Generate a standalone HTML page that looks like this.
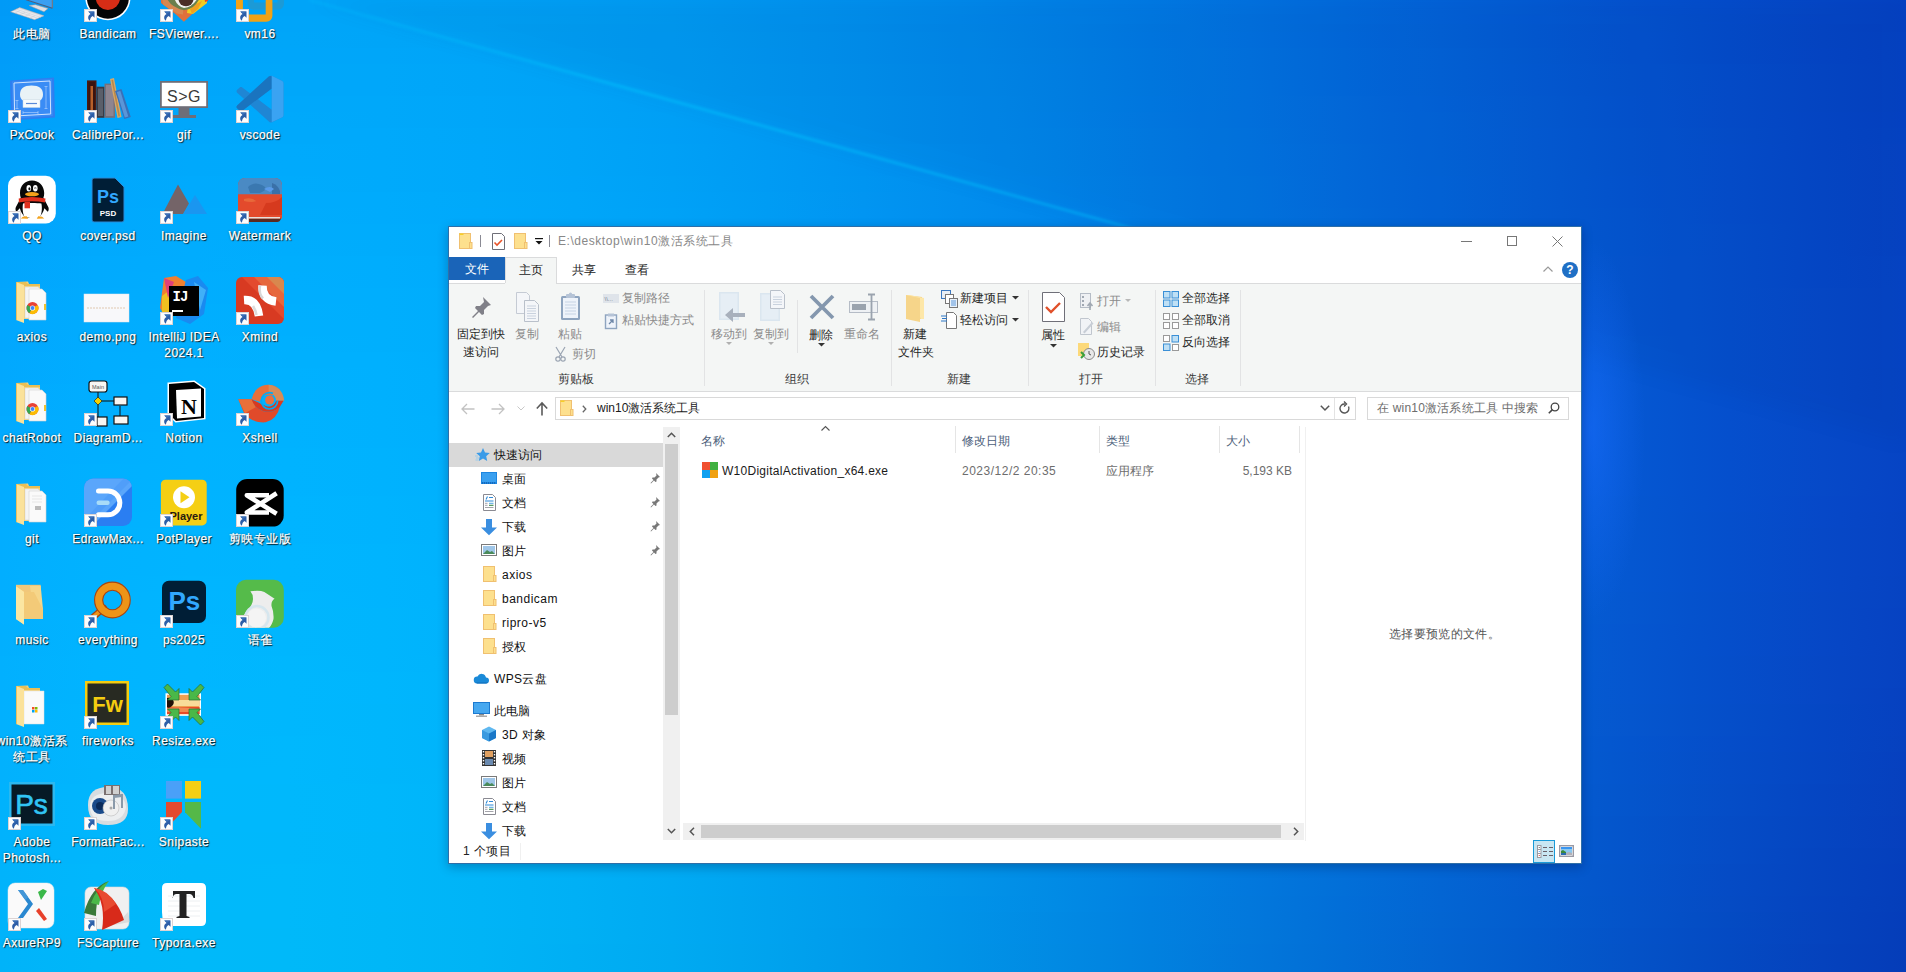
<!DOCTYPE html><html><head><meta charset="utf-8"><style>
*{margin:0;padding:0;box-sizing:border-box}
html,body{width:1906px;height:972px;overflow:hidden}
body{position:relative;font-family:"Liberation Sans",sans-serif;font-size:12px;color:#000;
background:#0a7ad8}
.a{position:absolute}
.t{position:absolute;white-space:nowrap;line-height:16px}
svg{position:absolute;overflow:visible}
.dl{position:absolute;width:76px;text-align:center;color:#fff;font-size:12px;line-height:16px;
 letter-spacing:.45px;-webkit-text-stroke:.25px #fff;text-shadow:1px 1px 1px rgba(0,0,0,.9),0 0 2px rgba(0,0,0,.45)}
</style></head><body>
<svg style="left:0;top:0;position:absolute" width="1906" height="972" viewBox="0 0 1906 972"><defs><linearGradient id="g0" x1="0" x2="1" y1="0" y2="0"><stop offset="0.000" stop-color="#019af7"/><stop offset="0.050" stop-color="#009ff8"/><stop offset="0.101" stop-color="#00a3f8"/><stop offset="0.151" stop-color="#00a4f8"/><stop offset="0.201" stop-color="#00a4f8"/><stop offset="0.252" stop-color="#00a2f6"/><stop offset="0.302" stop-color="#009ff5"/><stop offset="0.353" stop-color="#009bf3"/><stop offset="0.403" stop-color="#0096f1"/><stop offset="0.453" stop-color="#0090ee"/><stop offset="0.504" stop-color="#0089eb"/><stop offset="0.554" stop-color="#0181e7"/><stop offset="0.604" stop-color="#017ae4"/><stop offset="0.655" stop-color="#0272e0"/><stop offset="0.705" stop-color="#026adc"/><stop offset="0.756" stop-color="#0362d8"/><stop offset="0.806" stop-color="#035ad3"/><stop offset="0.856" stop-color="#0452cf"/><stop offset="0.907" stop-color="#044ccb"/><stop offset="0.957" stop-color="#0546c6"/><stop offset="1.000" stop-color="#0541c2"/></linearGradient><linearGradient id="g1" x1="0" x2="1" y1="0" y2="0"><stop offset="0.000" stop-color="#019bf8"/><stop offset="0.050" stop-color="#00a0f9"/><stop offset="0.101" stop-color="#00a3f9"/><stop offset="0.151" stop-color="#00a5f9"/><stop offset="0.201" stop-color="#00a5f8"/><stop offset="0.252" stop-color="#00a3f7"/><stop offset="0.302" stop-color="#00a0f5"/><stop offset="0.353" stop-color="#009cf3"/><stop offset="0.403" stop-color="#0096f1"/><stop offset="0.453" stop-color="#0090ee"/><stop offset="0.504" stop-color="#0089eb"/><stop offset="0.554" stop-color="#0182e8"/><stop offset="0.604" stop-color="#017ae4"/><stop offset="0.655" stop-color="#0272e0"/><stop offset="0.705" stop-color="#026adc"/><stop offset="0.756" stop-color="#0362d8"/><stop offset="0.806" stop-color="#035ad4"/><stop offset="0.856" stop-color="#0453cf"/><stop offset="0.907" stop-color="#044ccb"/><stop offset="0.957" stop-color="#0546c6"/><stop offset="1.000" stop-color="#0541c2"/></linearGradient><linearGradient id="g2" x1="0" x2="1" y1="0" y2="0"><stop offset="0.000" stop-color="#019cf8"/><stop offset="0.050" stop-color="#00a1f9"/><stop offset="0.101" stop-color="#00a4f9"/><stop offset="0.151" stop-color="#00a6f9"/><stop offset="0.201" stop-color="#00a5f8"/><stop offset="0.252" stop-color="#00a4f7"/><stop offset="0.302" stop-color="#00a0f6"/><stop offset="0.353" stop-color="#009cf4"/><stop offset="0.403" stop-color="#0097f1"/><stop offset="0.453" stop-color="#0091ef"/><stop offset="0.504" stop-color="#008aeb"/><stop offset="0.554" stop-color="#0182e8"/><stop offset="0.604" stop-color="#017ae5"/><stop offset="0.655" stop-color="#0272e1"/><stop offset="0.705" stop-color="#026add"/><stop offset="0.756" stop-color="#0362d8"/><stop offset="0.806" stop-color="#035ad4"/><stop offset="0.856" stop-color="#0453d0"/><stop offset="0.907" stop-color="#044ccb"/><stop offset="0.957" stop-color="#0546c6"/><stop offset="1.000" stop-color="#0542c3"/></linearGradient><linearGradient id="g3" x1="0" x2="1" y1="0" y2="0"><stop offset="0.000" stop-color="#019cf9"/><stop offset="0.050" stop-color="#00a2f9"/><stop offset="0.101" stop-color="#00a5fa"/><stop offset="0.151" stop-color="#00a6fa"/><stop offset="0.201" stop-color="#00a6f9"/><stop offset="0.252" stop-color="#00a4f8"/><stop offset="0.302" stop-color="#00a1f6"/><stop offset="0.353" stop-color="#009df4"/><stop offset="0.403" stop-color="#0097f2"/><stop offset="0.453" stop-color="#0091ef"/><stop offset="0.504" stop-color="#008aec"/><stop offset="0.554" stop-color="#0183e8"/><stop offset="0.604" stop-color="#017be5"/><stop offset="0.655" stop-color="#0273e1"/><stop offset="0.705" stop-color="#026bdd"/><stop offset="0.756" stop-color="#0363d9"/><stop offset="0.806" stop-color="#035bd4"/><stop offset="0.856" stop-color="#0453d0"/><stop offset="0.907" stop-color="#044ccb"/><stop offset="0.957" stop-color="#0546c7"/><stop offset="1.000" stop-color="#0542c3"/></linearGradient><linearGradient id="g4" x1="0" x2="1" y1="0" y2="0"><stop offset="0.000" stop-color="#019df9"/><stop offset="0.050" stop-color="#00a2fa"/><stop offset="0.101" stop-color="#00a5fa"/><stop offset="0.151" stop-color="#00a7fa"/><stop offset="0.201" stop-color="#00a7f9"/><stop offset="0.252" stop-color="#00a5f8"/><stop offset="0.302" stop-color="#00a2f6"/><stop offset="0.353" stop-color="#009df4"/><stop offset="0.403" stop-color="#0098f2"/><stop offset="0.453" stop-color="#0092ef"/><stop offset="0.504" stop-color="#008bec"/><stop offset="0.554" stop-color="#0183e9"/><stop offset="0.604" stop-color="#017be5"/><stop offset="0.655" stop-color="#0273e1"/><stop offset="0.705" stop-color="#026bdd"/><stop offset="0.756" stop-color="#0363d9"/><stop offset="0.806" stop-color="#035bd5"/><stop offset="0.856" stop-color="#0454d0"/><stop offset="0.907" stop-color="#044dcc"/><stop offset="0.957" stop-color="#0547c7"/><stop offset="1.000" stop-color="#0542c3"/></linearGradient><linearGradient id="g5" x1="0" x2="1" y1="0" y2="0"><stop offset="0.000" stop-color="#019ef9"/><stop offset="0.050" stop-color="#01a3fa"/><stop offset="0.101" stop-color="#00a6fb"/><stop offset="0.151" stop-color="#00a7fa"/><stop offset="0.201" stop-color="#00a7fa"/><stop offset="0.252" stop-color="#00a5f8"/><stop offset="0.302" stop-color="#00a2f7"/><stop offset="0.353" stop-color="#009ef5"/><stop offset="0.403" stop-color="#0098f2"/><stop offset="0.453" stop-color="#0092f0"/><stop offset="0.504" stop-color="#018bec"/><stop offset="0.554" stop-color="#0184e9"/><stop offset="0.604" stop-color="#017ce5"/><stop offset="0.655" stop-color="#0274e2"/><stop offset="0.705" stop-color="#026bde"/><stop offset="0.756" stop-color="#0363d9"/><stop offset="0.806" stop-color="#045bd5"/><stop offset="0.856" stop-color="#0454d0"/><stop offset="0.907" stop-color="#054dcc"/><stop offset="0.957" stop-color="#0547c7"/><stop offset="1.000" stop-color="#0542c3"/></linearGradient><linearGradient id="g6" x1="0" x2="1" y1="0" y2="0"><stop offset="0.000" stop-color="#019efa"/><stop offset="0.050" stop-color="#01a4fb"/><stop offset="0.101" stop-color="#00a7fb"/><stop offset="0.151" stop-color="#00a8fb"/><stop offset="0.201" stop-color="#00a8fa"/><stop offset="0.252" stop-color="#00a6f9"/><stop offset="0.302" stop-color="#00a3f7"/><stop offset="0.353" stop-color="#009ef5"/><stop offset="0.403" stop-color="#0099f3"/><stop offset="0.453" stop-color="#0093f0"/><stop offset="0.504" stop-color="#018ced"/><stop offset="0.554" stop-color="#0184e9"/><stop offset="0.604" stop-color="#017ce6"/><stop offset="0.655" stop-color="#0274e2"/><stop offset="0.705" stop-color="#036cde"/><stop offset="0.756" stop-color="#0363da"/><stop offset="0.806" stop-color="#045cd5"/><stop offset="0.856" stop-color="#0454d1"/><stop offset="0.907" stop-color="#054dcc"/><stop offset="0.957" stop-color="#0547c7"/><stop offset="1.000" stop-color="#0542c3"/></linearGradient><linearGradient id="g7" x1="0" x2="1" y1="0" y2="0"><stop offset="0.000" stop-color="#019ffa"/><stop offset="0.050" stop-color="#01a4fb"/><stop offset="0.101" stop-color="#00a7fb"/><stop offset="0.151" stop-color="#00a9fb"/><stop offset="0.201" stop-color="#00a8fa"/><stop offset="0.252" stop-color="#00a6f9"/><stop offset="0.302" stop-color="#00a3f7"/><stop offset="0.353" stop-color="#009ff5"/><stop offset="0.403" stop-color="#0099f3"/><stop offset="0.453" stop-color="#0093f0"/><stop offset="0.504" stop-color="#018ced"/><stop offset="0.554" stop-color="#0184ea"/><stop offset="0.604" stop-color="#027ce6"/><stop offset="0.655" stop-color="#0274e2"/><stop offset="0.705" stop-color="#036cde"/><stop offset="0.756" stop-color="#0364da"/><stop offset="0.806" stop-color="#045cd5"/><stop offset="0.856" stop-color="#0454d1"/><stop offset="0.907" stop-color="#054dcc"/><stop offset="0.957" stop-color="#0547c8"/><stop offset="1.000" stop-color="#0542c4"/></linearGradient><linearGradient id="g8" x1="0" x2="1" y1="0" y2="0"><stop offset="0.000" stop-color="#01a0fb"/><stop offset="0.050" stop-color="#01a5fb"/><stop offset="0.101" stop-color="#00a8fc"/><stop offset="0.151" stop-color="#00a9fb"/><stop offset="0.201" stop-color="#00a9fb"/><stop offset="0.252" stop-color="#00a7f9"/><stop offset="0.302" stop-color="#00a4f8"/><stop offset="0.353" stop-color="#009ff6"/><stop offset="0.403" stop-color="#009af3"/><stop offset="0.453" stop-color="#0093f0"/><stop offset="0.504" stop-color="#018ced"/><stop offset="0.554" stop-color="#0185ea"/><stop offset="0.604" stop-color="#027de6"/><stop offset="0.655" stop-color="#0275e2"/><stop offset="0.705" stop-color="#036cde"/><stop offset="0.756" stop-color="#0364da"/><stop offset="0.806" stop-color="#045cd6"/><stop offset="0.856" stop-color="#0455d1"/><stop offset="0.907" stop-color="#054ecc"/><stop offset="0.957" stop-color="#0547c8"/><stop offset="1.000" stop-color="#0543c4"/></linearGradient><linearGradient id="g9" x1="0" x2="1" y1="0" y2="0"><stop offset="0.000" stop-color="#01a0fb"/><stop offset="0.050" stop-color="#01a5fc"/><stop offset="0.101" stop-color="#00a9fc"/><stop offset="0.151" stop-color="#00aafc"/><stop offset="0.201" stop-color="#00a9fb"/><stop offset="0.252" stop-color="#00a7fa"/><stop offset="0.302" stop-color="#00a4f8"/><stop offset="0.353" stop-color="#00a0f6"/><stop offset="0.403" stop-color="#009af3"/><stop offset="0.453" stop-color="#0094f1"/><stop offset="0.504" stop-color="#018dee"/><stop offset="0.554" stop-color="#0185ea"/><stop offset="0.604" stop-color="#027de6"/><stop offset="0.655" stop-color="#0275e3"/><stop offset="0.705" stop-color="#036dde"/><stop offset="0.756" stop-color="#0364da"/><stop offset="0.806" stop-color="#045cd6"/><stop offset="0.856" stop-color="#0455d1"/><stop offset="0.907" stop-color="#054ecd"/><stop offset="0.957" stop-color="#0547c8"/><stop offset="1.000" stop-color="#0643c4"/></linearGradient><linearGradient id="g10" x1="0" x2="1" y1="0" y2="0"><stop offset="0.000" stop-color="#01a1fb"/><stop offset="0.050" stop-color="#01a6fc"/><stop offset="0.101" stop-color="#00a9fc"/><stop offset="0.151" stop-color="#00aafc"/><stop offset="0.201" stop-color="#00aafb"/><stop offset="0.252" stop-color="#00a8fa"/><stop offset="0.302" stop-color="#00a5f8"/><stop offset="0.353" stop-color="#00a0f6"/><stop offset="0.403" stop-color="#009bf4"/><stop offset="0.453" stop-color="#0094f1"/><stop offset="0.504" stop-color="#018dee"/><stop offset="0.554" stop-color="#0186ea"/><stop offset="0.604" stop-color="#027de7"/><stop offset="0.655" stop-color="#0275e3"/><stop offset="0.705" stop-color="#036ddf"/><stop offset="0.756" stop-color="#0365da"/><stop offset="0.806" stop-color="#045dd6"/><stop offset="0.856" stop-color="#0455d1"/><stop offset="0.907" stop-color="#054ecd"/><stop offset="0.957" stop-color="#0548c8"/><stop offset="1.000" stop-color="#0643c4"/></linearGradient><linearGradient id="g11" x1="0" x2="1" y1="0" y2="0"><stop offset="0.000" stop-color="#01a2fc"/><stop offset="0.050" stop-color="#01a7fc"/><stop offset="0.101" stop-color="#00aafd"/><stop offset="0.151" stop-color="#00abfc"/><stop offset="0.201" stop-color="#00aafb"/><stop offset="0.252" stop-color="#00a8fa"/><stop offset="0.302" stop-color="#00a5f9"/><stop offset="0.353" stop-color="#00a1f6"/><stop offset="0.403" stop-color="#009bf4"/><stop offset="0.453" stop-color="#0095f1"/><stop offset="0.504" stop-color="#018eee"/><stop offset="0.554" stop-color="#0186eb"/><stop offset="0.604" stop-color="#027ee7"/><stop offset="0.655" stop-color="#0276e3"/><stop offset="0.705" stop-color="#036ddf"/><stop offset="0.756" stop-color="#0365db"/><stop offset="0.806" stop-color="#045dd6"/><stop offset="0.856" stop-color="#0455d2"/><stop offset="0.907" stop-color="#054ecd"/><stop offset="0.957" stop-color="#0548c8"/><stop offset="1.000" stop-color="#0643c4"/></linearGradient><linearGradient id="g12" x1="0" x2="1" y1="0" y2="0"><stop offset="0.000" stop-color="#02a2fc"/><stop offset="0.050" stop-color="#01a7fd"/><stop offset="0.101" stop-color="#00aafd"/><stop offset="0.151" stop-color="#00abfd"/><stop offset="0.201" stop-color="#00abfc"/><stop offset="0.252" stop-color="#00a9fa"/><stop offset="0.302" stop-color="#00a6f9"/><stop offset="0.353" stop-color="#00a1f7"/><stop offset="0.403" stop-color="#009cf4"/><stop offset="0.453" stop-color="#0195f1"/><stop offset="0.504" stop-color="#018eee"/><stop offset="0.554" stop-color="#0186eb"/><stop offset="0.604" stop-color="#027ee7"/><stop offset="0.655" stop-color="#0276e3"/><stop offset="0.705" stop-color="#036ddf"/><stop offset="0.756" stop-color="#0365db"/><stop offset="0.806" stop-color="#045dd6"/><stop offset="0.856" stop-color="#0455d2"/><stop offset="0.907" stop-color="#054ecd"/><stop offset="0.957" stop-color="#0548c8"/><stop offset="1.000" stop-color="#0643c4"/></linearGradient><linearGradient id="g13" x1="0" x2="1" y1="0" y2="0"><stop offset="0.000" stop-color="#02a3fc"/><stop offset="0.050" stop-color="#01a8fd"/><stop offset="0.101" stop-color="#00abfd"/><stop offset="0.151" stop-color="#00acfd"/><stop offset="0.201" stop-color="#00abfc"/><stop offset="0.252" stop-color="#00a9fb"/><stop offset="0.302" stop-color="#00a6f9"/><stop offset="0.353" stop-color="#00a2f7"/><stop offset="0.403" stop-color="#009cf4"/><stop offset="0.453" stop-color="#0195f2"/><stop offset="0.504" stop-color="#018eee"/><stop offset="0.554" stop-color="#0187eb"/><stop offset="0.604" stop-color="#027ee7"/><stop offset="0.655" stop-color="#0276e3"/><stop offset="0.705" stop-color="#036edf"/><stop offset="0.756" stop-color="#0365db"/><stop offset="0.806" stop-color="#045dd6"/><stop offset="0.856" stop-color="#0456d2"/><stop offset="0.907" stop-color="#054ecd"/><stop offset="0.957" stop-color="#0548c8"/><stop offset="1.000" stop-color="#0643c4"/></linearGradient><linearGradient id="g14" x1="0" x2="1" y1="0" y2="0"><stop offset="0.000" stop-color="#02a3fc"/><stop offset="0.050" stop-color="#01a8fd"/><stop offset="0.101" stop-color="#00abfd"/><stop offset="0.151" stop-color="#00acfd"/><stop offset="0.201" stop-color="#00acfc"/><stop offset="0.252" stop-color="#00aafb"/><stop offset="0.302" stop-color="#00a7f9"/><stop offset="0.353" stop-color="#00a2f7"/><stop offset="0.403" stop-color="#009cf5"/><stop offset="0.453" stop-color="#0196f2"/><stop offset="0.504" stop-color="#018fef"/><stop offset="0.554" stop-color="#0187eb"/><stop offset="0.604" stop-color="#027fe7"/><stop offset="0.655" stop-color="#0276e3"/><stop offset="0.705" stop-color="#036edf"/><stop offset="0.756" stop-color="#0366db"/><stop offset="0.806" stop-color="#045dd6"/><stop offset="0.856" stop-color="#0456d2"/><stop offset="0.907" stop-color="#054fcd"/><stop offset="0.957" stop-color="#0548c8"/><stop offset="1.000" stop-color="#0643c4"/></linearGradient><linearGradient id="g15" x1="0" x2="1" y1="0" y2="0"><stop offset="0.000" stop-color="#02a4fd"/><stop offset="0.050" stop-color="#01a9fd"/><stop offset="0.101" stop-color="#01acfe"/><stop offset="0.151" stop-color="#00adfd"/><stop offset="0.201" stop-color="#00acfc"/><stop offset="0.252" stop-color="#00aafb"/><stop offset="0.302" stop-color="#00a7f9"/><stop offset="0.353" stop-color="#00a2f7"/><stop offset="0.403" stop-color="#009df5"/><stop offset="0.453" stop-color="#0196f2"/><stop offset="0.504" stop-color="#018fef"/><stop offset="0.554" stop-color="#0187eb"/><stop offset="0.604" stop-color="#027fe8"/><stop offset="0.655" stop-color="#0277e4"/><stop offset="0.705" stop-color="#036edf"/><stop offset="0.756" stop-color="#0366db"/><stop offset="0.806" stop-color="#045ed7"/><stop offset="0.856" stop-color="#0456d2"/><stop offset="0.907" stop-color="#054fcd"/><stop offset="0.957" stop-color="#0548c9"/><stop offset="1.000" stop-color="#0643c4"/></linearGradient><linearGradient id="g16" x1="0" x2="1" y1="0" y2="0"><stop offset="0.000" stop-color="#02a5fd"/><stop offset="0.050" stop-color="#01aafe"/><stop offset="0.101" stop-color="#01acfe"/><stop offset="0.151" stop-color="#00aefd"/><stop offset="0.201" stop-color="#00adfd"/><stop offset="0.252" stop-color="#00abfb"/><stop offset="0.302" stop-color="#00a7fa"/><stop offset="0.353" stop-color="#00a3f7"/><stop offset="0.403" stop-color="#009df5"/><stop offset="0.453" stop-color="#0197f2"/><stop offset="0.504" stop-color="#018fef"/><stop offset="0.554" stop-color="#0187eb"/><stop offset="0.604" stop-color="#027fe8"/><stop offset="0.655" stop-color="#0277e4"/><stop offset="0.705" stop-color="#036edf"/><stop offset="0.756" stop-color="#0366db"/><stop offset="0.806" stop-color="#045ed7"/><stop offset="0.856" stop-color="#0556d2"/><stop offset="0.907" stop-color="#054fcd"/><stop offset="0.957" stop-color="#0548c9"/><stop offset="1.000" stop-color="#0644c5"/></linearGradient><linearGradient id="g17" x1="0" x2="1" y1="0" y2="0"><stop offset="0.000" stop-color="#02a5fd"/><stop offset="0.050" stop-color="#01aafe"/><stop offset="0.101" stop-color="#01adfe"/><stop offset="0.151" stop-color="#00aefe"/><stop offset="0.201" stop-color="#00adfd"/><stop offset="0.252" stop-color="#00abfc"/><stop offset="0.302" stop-color="#00a8fa"/><stop offset="0.353" stop-color="#00a3f8"/><stop offset="0.403" stop-color="#009df5"/><stop offset="0.453" stop-color="#0197f2"/><stop offset="0.504" stop-color="#0190ef"/><stop offset="0.554" stop-color="#0188eb"/><stop offset="0.604" stop-color="#0280e8"/><stop offset="0.655" stop-color="#0277e4"/><stop offset="0.705" stop-color="#036fe0"/><stop offset="0.756" stop-color="#0466db"/><stop offset="0.806" stop-color="#045ed7"/><stop offset="0.856" stop-color="#0556d2"/><stop offset="0.907" stop-color="#054fcd"/><stop offset="0.957" stop-color="#0548c9"/><stop offset="1.000" stop-color="#0644c5"/></linearGradient><linearGradient id="g18" x1="0" x2="1" y1="0" y2="0"><stop offset="0.000" stop-color="#02a6fd"/><stop offset="0.050" stop-color="#01abfe"/><stop offset="0.101" stop-color="#01adfe"/><stop offset="0.151" stop-color="#00aefe"/><stop offset="0.201" stop-color="#00aefd"/><stop offset="0.252" stop-color="#00acfc"/><stop offset="0.302" stop-color="#00a8fa"/><stop offset="0.353" stop-color="#00a4f8"/><stop offset="0.403" stop-color="#009ef5"/><stop offset="0.453" stop-color="#0197f2"/><stop offset="0.504" stop-color="#0190ef"/><stop offset="0.554" stop-color="#0288ec"/><stop offset="0.604" stop-color="#0280e8"/><stop offset="0.655" stop-color="#0277e4"/><stop offset="0.705" stop-color="#036fe0"/><stop offset="0.756" stop-color="#0466db"/><stop offset="0.806" stop-color="#045ed7"/><stop offset="0.856" stop-color="#0556d2"/><stop offset="0.907" stop-color="#054fcd"/><stop offset="0.957" stop-color="#0649c9"/><stop offset="1.000" stop-color="#0644c5"/></linearGradient><linearGradient id="g19" x1="0" x2="1" y1="0" y2="0"><stop offset="0.000" stop-color="#02a6fe"/><stop offset="0.050" stop-color="#01abfe"/><stop offset="0.101" stop-color="#01aefe"/><stop offset="0.151" stop-color="#00affe"/><stop offset="0.201" stop-color="#00aefd"/><stop offset="0.252" stop-color="#00acfc"/><stop offset="0.302" stop-color="#00a9fa"/><stop offset="0.353" stop-color="#00a4f8"/><stop offset="0.403" stop-color="#009ef5"/><stop offset="0.453" stop-color="#0198f2"/><stop offset="0.504" stop-color="#0190ef"/><stop offset="0.554" stop-color="#0288ec"/><stop offset="0.604" stop-color="#0280e8"/><stop offset="0.655" stop-color="#0378e4"/><stop offset="0.705" stop-color="#036fe0"/><stop offset="0.756" stop-color="#0466db"/><stop offset="0.806" stop-color="#045ed7"/><stop offset="0.856" stop-color="#0556d2"/><stop offset="0.907" stop-color="#054fcd"/><stop offset="0.957" stop-color="#0649c9"/><stop offset="1.000" stop-color="#0644c5"/></linearGradient><linearGradient id="g20" x1="0" x2="1" y1="0" y2="0"><stop offset="0.000" stop-color="#02a7fe"/><stop offset="0.050" stop-color="#01acfe"/><stop offset="0.101" stop-color="#01aeff"/><stop offset="0.151" stop-color="#00affe"/><stop offset="0.201" stop-color="#00affd"/><stop offset="0.252" stop-color="#00adfc"/><stop offset="0.302" stop-color="#00a9fa"/><stop offset="0.353" stop-color="#00a4f8"/><stop offset="0.403" stop-color="#009ef5"/><stop offset="0.453" stop-color="#0198f3"/><stop offset="0.504" stop-color="#0190ef"/><stop offset="0.554" stop-color="#0289ec"/><stop offset="0.604" stop-color="#0280e8"/><stop offset="0.655" stop-color="#0378e4"/><stop offset="0.705" stop-color="#036fe0"/><stop offset="0.756" stop-color="#0467db"/><stop offset="0.806" stop-color="#045ed7"/><stop offset="0.856" stop-color="#0556d2"/><stop offset="0.907" stop-color="#054fcd"/><stop offset="0.957" stop-color="#0649c9"/><stop offset="1.000" stop-color="#0644c5"/></linearGradient><linearGradient id="g21" x1="0" x2="1" y1="0" y2="0"><stop offset="0.000" stop-color="#02a7fe"/><stop offset="0.050" stop-color="#01acff"/><stop offset="0.101" stop-color="#01afff"/><stop offset="0.151" stop-color="#00b0fe"/><stop offset="0.201" stop-color="#00affd"/><stop offset="0.252" stop-color="#00adfc"/><stop offset="0.302" stop-color="#00a9fa"/><stop offset="0.353" stop-color="#00a5f8"/><stop offset="0.403" stop-color="#009ff6"/><stop offset="0.453" stop-color="#0198f3"/><stop offset="0.504" stop-color="#0191ef"/><stop offset="0.554" stop-color="#0289ec"/><stop offset="0.604" stop-color="#0280e8"/><stop offset="0.655" stop-color="#0378e4"/><stop offset="0.705" stop-color="#036fe0"/><stop offset="0.756" stop-color="#0467db"/><stop offset="0.806" stop-color="#045ed7"/><stop offset="0.856" stop-color="#0557d2"/><stop offset="0.907" stop-color="#054fcd"/><stop offset="0.957" stop-color="#0649c9"/><stop offset="1.000" stop-color="#0644c5"/></linearGradient><linearGradient id="g22" x1="0" x2="1" y1="0" y2="0"><stop offset="0.000" stop-color="#02a8fe"/><stop offset="0.050" stop-color="#01adff"/><stop offset="0.101" stop-color="#01afff"/><stop offset="0.151" stop-color="#00b0fe"/><stop offset="0.201" stop-color="#00b0fe"/><stop offset="0.252" stop-color="#00adfc"/><stop offset="0.302" stop-color="#00aafa"/><stop offset="0.353" stop-color="#00a5f8"/><stop offset="0.403" stop-color="#019ff6"/><stop offset="0.453" stop-color="#0198f3"/><stop offset="0.504" stop-color="#0191ef"/><stop offset="0.554" stop-color="#0289ec"/><stop offset="0.604" stop-color="#0281e8"/><stop offset="0.655" stop-color="#0378e4"/><stop offset="0.705" stop-color="#036fe0"/><stop offset="0.756" stop-color="#0467db"/><stop offset="0.806" stop-color="#045fd7"/><stop offset="0.856" stop-color="#0557d2"/><stop offset="0.907" stop-color="#054fcd"/><stop offset="0.957" stop-color="#0649c9"/><stop offset="1.000" stop-color="#0644c5"/></linearGradient><linearGradient id="g23" x1="0" x2="1" y1="0" y2="0"><stop offset="0.000" stop-color="#02a8fe"/><stop offset="0.050" stop-color="#01adff"/><stop offset="0.101" stop-color="#01b0ff"/><stop offset="0.151" stop-color="#00b1ff"/><stop offset="0.201" stop-color="#00b0fe"/><stop offset="0.252" stop-color="#00aefc"/><stop offset="0.302" stop-color="#00aafa"/><stop offset="0.353" stop-color="#00a5f8"/><stop offset="0.403" stop-color="#019ff6"/><stop offset="0.453" stop-color="#0199f3"/><stop offset="0.504" stop-color="#0191ef"/><stop offset="0.554" stop-color="#0289ec"/><stop offset="0.604" stop-color="#0281e8"/><stop offset="0.655" stop-color="#0378e4"/><stop offset="0.705" stop-color="#0370e0"/><stop offset="0.756" stop-color="#0467db"/><stop offset="0.806" stop-color="#045fd7"/><stop offset="0.856" stop-color="#0557d2"/><stop offset="0.907" stop-color="#054fcd"/><stop offset="0.957" stop-color="#0649c9"/><stop offset="1.000" stop-color="#0644c4"/></linearGradient><linearGradient id="g24" x1="0" x2="1" y1="0" y2="0"><stop offset="0.000" stop-color="#02a9fe"/><stop offset="0.050" stop-color="#01aeff"/><stop offset="0.101" stop-color="#01b0ff"/><stop offset="0.151" stop-color="#00b1ff"/><stop offset="0.201" stop-color="#00b0fe"/><stop offset="0.252" stop-color="#00aefc"/><stop offset="0.302" stop-color="#00aafb"/><stop offset="0.353" stop-color="#00a6f8"/><stop offset="0.403" stop-color="#01a0f6"/><stop offset="0.453" stop-color="#0199f3"/><stop offset="0.504" stop-color="#0191ef"/><stop offset="0.554" stop-color="#0289ec"/><stop offset="0.604" stop-color="#0281e8"/><stop offset="0.655" stop-color="#0378e4"/><stop offset="0.705" stop-color="#0370e0"/><stop offset="0.756" stop-color="#0467db"/><stop offset="0.806" stop-color="#045fd7"/><stop offset="0.856" stop-color="#0557d2"/><stop offset="0.907" stop-color="#054fcd"/><stop offset="0.957" stop-color="#0649c9"/><stop offset="1.000" stop-color="#0644c4"/></linearGradient><linearGradient id="g25" x1="0" x2="1" y1="0" y2="0"><stop offset="0.000" stop-color="#02a9fe"/><stop offset="0.050" stop-color="#01aeff"/><stop offset="0.101" stop-color="#01b1ff"/><stop offset="0.151" stop-color="#00b2ff"/><stop offset="0.201" stop-color="#00b1fe"/><stop offset="0.252" stop-color="#00aefc"/><stop offset="0.302" stop-color="#00abfb"/><stop offset="0.353" stop-color="#00a6f8"/><stop offset="0.403" stop-color="#01a0f6"/><stop offset="0.453" stop-color="#0199f3"/><stop offset="0.504" stop-color="#0192ef"/><stop offset="0.554" stop-color="#028aec"/><stop offset="0.604" stop-color="#0281e8"/><stop offset="0.655" stop-color="#0379e4"/><stop offset="0.705" stop-color="#0370e0"/><stop offset="0.756" stop-color="#0467db"/><stop offset="0.806" stop-color="#045fd7"/><stop offset="0.856" stop-color="#0557d2"/><stop offset="0.907" stop-color="#054fcd"/><stop offset="0.957" stop-color="#0649c8"/><stop offset="1.000" stop-color="#0644c4"/></linearGradient><linearGradient id="g26" x1="0" x2="1" y1="0" y2="0"><stop offset="0.000" stop-color="#02aaff"/><stop offset="0.050" stop-color="#01aeff"/><stop offset="0.101" stop-color="#01b1ff"/><stop offset="0.151" stop-color="#00b2ff"/><stop offset="0.201" stop-color="#00b1fe"/><stop offset="0.252" stop-color="#00affc"/><stop offset="0.302" stop-color="#00abfb"/><stop offset="0.353" stop-color="#00a6f8"/><stop offset="0.403" stop-color="#01a0f6"/><stop offset="0.453" stop-color="#0199f3"/><stop offset="0.504" stop-color="#0192ef"/><stop offset="0.554" stop-color="#028aec"/><stop offset="0.604" stop-color="#0281e8"/><stop offset="0.655" stop-color="#0379e4"/><stop offset="0.705" stop-color="#0370e0"/><stop offset="0.756" stop-color="#0467db"/><stop offset="0.806" stop-color="#045fd7"/><stop offset="0.856" stop-color="#0557d2"/><stop offset="0.907" stop-color="#054fcd"/><stop offset="0.957" stop-color="#0649c8"/><stop offset="1.000" stop-color="#0644c4"/></linearGradient><linearGradient id="g27" x1="0" x2="1" y1="0" y2="0"><stop offset="0.000" stop-color="#02aaff"/><stop offset="0.050" stop-color="#01afff"/><stop offset="0.101" stop-color="#01b2ff"/><stop offset="0.151" stop-color="#00b2ff"/><stop offset="0.201" stop-color="#00b1fe"/><stop offset="0.252" stop-color="#00affd"/><stop offset="0.302" stop-color="#00abfb"/><stop offset="0.353" stop-color="#00a6f8"/><stop offset="0.403" stop-color="#01a0f6"/><stop offset="0.453" stop-color="#019af3"/><stop offset="0.504" stop-color="#0192ef"/><stop offset="0.554" stop-color="#028aec"/><stop offset="0.604" stop-color="#0282e8"/><stop offset="0.655" stop-color="#0379e4"/><stop offset="0.705" stop-color="#0370e0"/><stop offset="0.756" stop-color="#0467db"/><stop offset="0.806" stop-color="#045fd7"/><stop offset="0.856" stop-color="#0557d2"/><stop offset="0.907" stop-color="#054fcd"/><stop offset="0.957" stop-color="#0649c8"/><stop offset="1.000" stop-color="#0644c4"/></linearGradient><linearGradient id="g28" x1="0" x2="1" y1="0" y2="0"><stop offset="0.000" stop-color="#02abff"/><stop offset="0.050" stop-color="#01afff"/><stop offset="0.101" stop-color="#01b2ff"/><stop offset="0.151" stop-color="#00b3ff"/><stop offset="0.201" stop-color="#00b2fe"/><stop offset="0.252" stop-color="#00affd"/><stop offset="0.302" stop-color="#00acfb"/><stop offset="0.353" stop-color="#00a7f8"/><stop offset="0.403" stop-color="#01a1f6"/><stop offset="0.453" stop-color="#019af3"/><stop offset="0.504" stop-color="#0192ef"/><stop offset="0.554" stop-color="#028aec"/><stop offset="0.604" stop-color="#0282e8"/><stop offset="0.655" stop-color="#0379e4"/><stop offset="0.705" stop-color="#0370e0"/><stop offset="0.756" stop-color="#0467db"/><stop offset="0.806" stop-color="#045fd7"/><stop offset="0.856" stop-color="#0557d2"/><stop offset="0.907" stop-color="#054fcd"/><stop offset="0.957" stop-color="#0649c8"/><stop offset="1.000" stop-color="#0644c4"/></linearGradient><linearGradient id="g29" x1="0" x2="1" y1="0" y2="0"><stop offset="0.000" stop-color="#02abff"/><stop offset="0.050" stop-color="#01b0ff"/><stop offset="0.101" stop-color="#01b2ff"/><stop offset="0.151" stop-color="#00b3ff"/><stop offset="0.201" stop-color="#00b2fe"/><stop offset="0.252" stop-color="#00b0fd"/><stop offset="0.302" stop-color="#00acfb"/><stop offset="0.353" stop-color="#00a7f8"/><stop offset="0.403" stop-color="#01a1f6"/><stop offset="0.453" stop-color="#019af3"/><stop offset="0.504" stop-color="#0192ef"/><stop offset="0.554" stop-color="#028aec"/><stop offset="0.604" stop-color="#0282e8"/><stop offset="0.655" stop-color="#0379e4"/><stop offset="0.705" stop-color="#0370e0"/><stop offset="0.756" stop-color="#0468db"/><stop offset="0.806" stop-color="#045fd6"/><stop offset="0.856" stop-color="#0557d2"/><stop offset="0.907" stop-color="#054fcd"/><stop offset="0.957" stop-color="#0649c8"/><stop offset="1.000" stop-color="#0644c4"/></linearGradient><linearGradient id="g30" x1="0" x2="1" y1="0" y2="0"><stop offset="0.000" stop-color="#02acff"/><stop offset="0.050" stop-color="#01b0ff"/><stop offset="0.101" stop-color="#01b3ff"/><stop offset="0.151" stop-color="#00b3ff"/><stop offset="0.201" stop-color="#00b2fe"/><stop offset="0.252" stop-color="#00b0fd"/><stop offset="0.302" stop-color="#00acfb"/><stop offset="0.353" stop-color="#00a7f8"/><stop offset="0.403" stop-color="#01a1f6"/><stop offset="0.453" stop-color="#019af3"/><stop offset="0.504" stop-color="#0193ef"/><stop offset="0.554" stop-color="#028bec"/><stop offset="0.604" stop-color="#0282e8"/><stop offset="0.655" stop-color="#0379e4"/><stop offset="0.705" stop-color="#0370df"/><stop offset="0.756" stop-color="#0468db"/><stop offset="0.806" stop-color="#045fd6"/><stop offset="0.856" stop-color="#0557d2"/><stop offset="0.907" stop-color="#054fcd"/><stop offset="0.957" stop-color="#0649c8"/><stop offset="1.000" stop-color="#0643c4"/></linearGradient><linearGradient id="g31" x1="0" x2="1" y1="0" y2="0"><stop offset="0.000" stop-color="#02acff"/><stop offset="0.050" stop-color="#01b0ff"/><stop offset="0.101" stop-color="#01b3ff"/><stop offset="0.151" stop-color="#00b4ff"/><stop offset="0.201" stop-color="#00b3fe"/><stop offset="0.252" stop-color="#00b0fc"/><stop offset="0.302" stop-color="#00acfb"/><stop offset="0.353" stop-color="#00a7f8"/><stop offset="0.403" stop-color="#01a1f6"/><stop offset="0.453" stop-color="#019af3"/><stop offset="0.504" stop-color="#0193ef"/><stop offset="0.554" stop-color="#028bec"/><stop offset="0.604" stop-color="#0282e8"/><stop offset="0.655" stop-color="#0379e4"/><stop offset="0.705" stop-color="#0370df"/><stop offset="0.756" stop-color="#0468db"/><stop offset="0.806" stop-color="#045fd6"/><stop offset="0.856" stop-color="#0557d1"/><stop offset="0.907" stop-color="#054fcd"/><stop offset="0.957" stop-color="#0648c8"/><stop offset="1.000" stop-color="#0643c4"/></linearGradient><linearGradient id="g32" x1="0" x2="1" y1="0" y2="0"><stop offset="0.000" stop-color="#02acff"/><stop offset="0.050" stop-color="#01b1ff"/><stop offset="0.101" stop-color="#01b3ff"/><stop offset="0.151" stop-color="#00b4ff"/><stop offset="0.201" stop-color="#00b3fe"/><stop offset="0.252" stop-color="#00b1fc"/><stop offset="0.302" stop-color="#00adfb"/><stop offset="0.353" stop-color="#00a8f8"/><stop offset="0.403" stop-color="#01a2f6"/><stop offset="0.453" stop-color="#019bf3"/><stop offset="0.504" stop-color="#0193ef"/><stop offset="0.554" stop-color="#028bec"/><stop offset="0.604" stop-color="#0282e8"/><stop offset="0.655" stop-color="#0379e4"/><stop offset="0.705" stop-color="#0370df"/><stop offset="0.756" stop-color="#0468db"/><stop offset="0.806" stop-color="#045fd6"/><stop offset="0.856" stop-color="#0557d1"/><stop offset="0.907" stop-color="#054fcc"/><stop offset="0.957" stop-color="#0648c8"/><stop offset="1.000" stop-color="#0643c3"/></linearGradient><linearGradient id="g33" x1="0" x2="1" y1="0" y2="0"><stop offset="0.000" stop-color="#02adff"/><stop offset="0.050" stop-color="#01b1ff"/><stop offset="0.101" stop-color="#01b4ff"/><stop offset="0.151" stop-color="#00b4ff"/><stop offset="0.201" stop-color="#00b3fe"/><stop offset="0.252" stop-color="#00b1fc"/><stop offset="0.302" stop-color="#00adfa"/><stop offset="0.353" stop-color="#00a8f8"/><stop offset="0.403" stop-color="#01a2f5"/><stop offset="0.453" stop-color="#019bf2"/><stop offset="0.504" stop-color="#0193ef"/><stop offset="0.554" stop-color="#028beb"/><stop offset="0.604" stop-color="#0282e8"/><stop offset="0.655" stop-color="#0379e3"/><stop offset="0.705" stop-color="#0370df"/><stop offset="0.756" stop-color="#0468db"/><stop offset="0.806" stop-color="#045fd6"/><stop offset="0.856" stop-color="#0557d1"/><stop offset="0.907" stop-color="#054fcc"/><stop offset="0.957" stop-color="#0648c7"/><stop offset="1.000" stop-color="#0643c3"/></linearGradient><linearGradient id="g34" x1="0" x2="1" y1="0" y2="0"><stop offset="0.000" stop-color="#02adff"/><stop offset="0.050" stop-color="#01b2ff"/><stop offset="0.101" stop-color="#01b4ff"/><stop offset="0.151" stop-color="#00b5ff"/><stop offset="0.201" stop-color="#00b4fe"/><stop offset="0.252" stop-color="#00b1fc"/><stop offset="0.302" stop-color="#00adfa"/><stop offset="0.353" stop-color="#00a8f8"/><stop offset="0.403" stop-color="#01a2f5"/><stop offset="0.453" stop-color="#019bf2"/><stop offset="0.504" stop-color="#0193ef"/><stop offset="0.554" stop-color="#028beb"/><stop offset="0.604" stop-color="#0282e7"/><stop offset="0.655" stop-color="#0379e3"/><stop offset="0.705" stop-color="#0371df"/><stop offset="0.756" stop-color="#0468da"/><stop offset="0.806" stop-color="#045fd6"/><stop offset="0.856" stop-color="#0557d1"/><stop offset="0.907" stop-color="#054fcc"/><stop offset="0.957" stop-color="#0648c7"/><stop offset="1.000" stop-color="#0643c3"/></linearGradient><linearGradient id="g35" x1="0" x2="1" y1="0" y2="0"><stop offset="0.000" stop-color="#02aeff"/><stop offset="0.050" stop-color="#01b2ff"/><stop offset="0.101" stop-color="#01b4ff"/><stop offset="0.151" stop-color="#00b5ff"/><stop offset="0.201" stop-color="#00b4fe"/><stop offset="0.252" stop-color="#00b1fc"/><stop offset="0.302" stop-color="#00adfa"/><stop offset="0.353" stop-color="#00a8f8"/><stop offset="0.403" stop-color="#01a2f5"/><stop offset="0.453" stop-color="#019bf2"/><stop offset="0.504" stop-color="#0193ef"/><stop offset="0.554" stop-color="#028beb"/><stop offset="0.604" stop-color="#0282e7"/><stop offset="0.655" stop-color="#037ae3"/><stop offset="0.705" stop-color="#0371df"/><stop offset="0.756" stop-color="#0468da"/><stop offset="0.806" stop-color="#045fd6"/><stop offset="0.856" stop-color="#0557d1"/><stop offset="0.907" stop-color="#054fcc"/><stop offset="0.957" stop-color="#0648c7"/><stop offset="1.000" stop-color="#0643c3"/></linearGradient><linearGradient id="g36" x1="0" x2="1" y1="0" y2="0"><stop offset="0.000" stop-color="#02aeff"/><stop offset="0.050" stop-color="#01b2ff"/><stop offset="0.101" stop-color="#01b5ff"/><stop offset="0.151" stop-color="#00b5ff"/><stop offset="0.201" stop-color="#00b4fe"/><stop offset="0.252" stop-color="#00b2fc"/><stop offset="0.302" stop-color="#00aefa"/><stop offset="0.353" stop-color="#00a8f8"/><stop offset="0.403" stop-color="#01a2f5"/><stop offset="0.453" stop-color="#019bf2"/><stop offset="0.504" stop-color="#0193ef"/><stop offset="0.554" stop-color="#028beb"/><stop offset="0.604" stop-color="#0282e7"/><stop offset="0.655" stop-color="#037ae3"/><stop offset="0.705" stop-color="#0371df"/><stop offset="0.756" stop-color="#0468da"/><stop offset="0.806" stop-color="#045fd5"/><stop offset="0.856" stop-color="#0557d1"/><stop offset="0.907" stop-color="#054fcc"/><stop offset="0.957" stop-color="#0648c7"/><stop offset="1.000" stop-color="#0643c2"/></linearGradient><linearGradient id="g37" x1="0" x2="1" y1="0" y2="0"><stop offset="0.000" stop-color="#02aeff"/><stop offset="0.050" stop-color="#01b3ff"/><stop offset="0.101" stop-color="#01b5ff"/><stop offset="0.151" stop-color="#00b6ff"/><stop offset="0.201" stop-color="#00b4fe"/><stop offset="0.252" stop-color="#00b2fc"/><stop offset="0.302" stop-color="#00aefa"/><stop offset="0.353" stop-color="#00a9f8"/><stop offset="0.403" stop-color="#01a2f5"/><stop offset="0.453" stop-color="#019bf2"/><stop offset="0.504" stop-color="#0194ef"/><stop offset="0.554" stop-color="#028beb"/><stop offset="0.604" stop-color="#0283e7"/><stop offset="0.655" stop-color="#037ae3"/><stop offset="0.705" stop-color="#0371de"/><stop offset="0.756" stop-color="#0468da"/><stop offset="0.806" stop-color="#045fd5"/><stop offset="0.856" stop-color="#0557d0"/><stop offset="0.907" stop-color="#054fcb"/><stop offset="0.957" stop-color="#0648c6"/><stop offset="1.000" stop-color="#0643c2"/></linearGradient><linearGradient id="g38" x1="0" x2="1" y1="0" y2="0"><stop offset="0.000" stop-color="#02afff"/><stop offset="0.050" stop-color="#01b3ff"/><stop offset="0.101" stop-color="#01b5ff"/><stop offset="0.151" stop-color="#00b6fe"/><stop offset="0.201" stop-color="#00b5fd"/><stop offset="0.252" stop-color="#00b2fc"/><stop offset="0.302" stop-color="#00aefa"/><stop offset="0.353" stop-color="#00a9f8"/><stop offset="0.403" stop-color="#01a3f5"/><stop offset="0.453" stop-color="#019bf2"/><stop offset="0.504" stop-color="#0194ee"/><stop offset="0.554" stop-color="#028beb"/><stop offset="0.604" stop-color="#0283e7"/><stop offset="0.655" stop-color="#037ae3"/><stop offset="0.705" stop-color="#0371de"/><stop offset="0.756" stop-color="#0468da"/><stop offset="0.806" stop-color="#045fd5"/><stop offset="0.856" stop-color="#0557d0"/><stop offset="0.907" stop-color="#054fcb"/><stop offset="0.957" stop-color="#0648c6"/><stop offset="1.000" stop-color="#0642c2"/></linearGradient><linearGradient id="g39" x1="0" x2="1" y1="0" y2="0"><stop offset="0.000" stop-color="#02affe"/><stop offset="0.050" stop-color="#01b3ff"/><stop offset="0.101" stop-color="#01b6ff"/><stop offset="0.151" stop-color="#00b6fe"/><stop offset="0.201" stop-color="#00b5fd"/><stop offset="0.252" stop-color="#00b2fc"/><stop offset="0.302" stop-color="#00aefa"/><stop offset="0.353" stop-color="#00a9f7"/><stop offset="0.403" stop-color="#00a3f5"/><stop offset="0.453" stop-color="#019cf2"/><stop offset="0.504" stop-color="#0194ee"/><stop offset="0.554" stop-color="#028bea"/><stop offset="0.604" stop-color="#0283e6"/><stop offset="0.655" stop-color="#037ae2"/><stop offset="0.705" stop-color="#0370de"/><stop offset="0.756" stop-color="#0467d9"/><stop offset="0.806" stop-color="#045fd5"/><stop offset="0.856" stop-color="#0556d0"/><stop offset="0.907" stop-color="#054fcb"/><stop offset="0.957" stop-color="#0648c6"/><stop offset="1.000" stop-color="#0642c2"/></linearGradient><linearGradient id="g40" x1="0" x2="1" y1="0" y2="0"><stop offset="0.000" stop-color="#02affe"/><stop offset="0.050" stop-color="#01b4ff"/><stop offset="0.101" stop-color="#01b6ff"/><stop offset="0.151" stop-color="#00b6fe"/><stop offset="0.201" stop-color="#00b5fd"/><stop offset="0.252" stop-color="#00b2fc"/><stop offset="0.302" stop-color="#00aefa"/><stop offset="0.353" stop-color="#00a9f7"/><stop offset="0.403" stop-color="#00a3f4"/><stop offset="0.453" stop-color="#019cf1"/><stop offset="0.504" stop-color="#0194ee"/><stop offset="0.554" stop-color="#028bea"/><stop offset="0.604" stop-color="#0283e6"/><stop offset="0.655" stop-color="#037ae2"/><stop offset="0.705" stop-color="#0370de"/><stop offset="0.756" stop-color="#0467d9"/><stop offset="0.806" stop-color="#045fd4"/><stop offset="0.856" stop-color="#0556cf"/><stop offset="0.907" stop-color="#054ecb"/><stop offset="0.957" stop-color="#0647c6"/><stop offset="1.000" stop-color="#0642c1"/></linearGradient><linearGradient id="g41" x1="0" x2="1" y1="0" y2="0"><stop offset="0.000" stop-color="#02b0fe"/><stop offset="0.050" stop-color="#01b4ff"/><stop offset="0.101" stop-color="#01b6ff"/><stop offset="0.151" stop-color="#00b7fe"/><stop offset="0.201" stop-color="#00b5fd"/><stop offset="0.252" stop-color="#00b3fb"/><stop offset="0.302" stop-color="#00aef9"/><stop offset="0.353" stop-color="#00a9f7"/><stop offset="0.403" stop-color="#00a3f4"/><stop offset="0.453" stop-color="#019cf1"/><stop offset="0.504" stop-color="#0194ee"/><stop offset="0.554" stop-color="#028bea"/><stop offset="0.604" stop-color="#0283e6"/><stop offset="0.655" stop-color="#037ae2"/><stop offset="0.705" stop-color="#0370dd"/><stop offset="0.756" stop-color="#0467d9"/><stop offset="0.806" stop-color="#045fd4"/><stop offset="0.856" stop-color="#0556cf"/><stop offset="0.907" stop-color="#054eca"/><stop offset="0.957" stop-color="#0647c5"/><stop offset="1.000" stop-color="#0642c1"/></linearGradient><linearGradient id="g42" x1="0" x2="1" y1="0" y2="0"><stop offset="0.000" stop-color="#02b0fe"/><stop offset="0.050" stop-color="#01b4ff"/><stop offset="0.101" stop-color="#01b6ff"/><stop offset="0.151" stop-color="#00b7fe"/><stop offset="0.201" stop-color="#00b6fd"/><stop offset="0.252" stop-color="#00b3fb"/><stop offset="0.302" stop-color="#00aff9"/><stop offset="0.353" stop-color="#00a9f7"/><stop offset="0.403" stop-color="#00a3f4"/><stop offset="0.453" stop-color="#019cf1"/><stop offset="0.504" stop-color="#0194ed"/><stop offset="0.554" stop-color="#028bea"/><stop offset="0.604" stop-color="#0283e6"/><stop offset="0.655" stop-color="#037ae2"/><stop offset="0.705" stop-color="#0370dd"/><stop offset="0.756" stop-color="#0467d9"/><stop offset="0.806" stop-color="#045ed4"/><stop offset="0.856" stop-color="#0556cf"/><stop offset="0.907" stop-color="#054eca"/><stop offset="0.957" stop-color="#0647c5"/><stop offset="1.000" stop-color="#0642c1"/></linearGradient><linearGradient id="g43" x1="0" x2="1" y1="0" y2="0"><stop offset="0.000" stop-color="#02b0fe"/><stop offset="0.050" stop-color="#01b4fe"/><stop offset="0.101" stop-color="#01b7fe"/><stop offset="0.151" stop-color="#00b7fe"/><stop offset="0.201" stop-color="#00b6fd"/><stop offset="0.252" stop-color="#00b3fb"/><stop offset="0.302" stop-color="#00aff9"/><stop offset="0.353" stop-color="#00a9f7"/><stop offset="0.403" stop-color="#00a3f4"/><stop offset="0.453" stop-color="#019cf1"/><stop offset="0.504" stop-color="#0194ed"/><stop offset="0.554" stop-color="#018be9"/><stop offset="0.604" stop-color="#0283e5"/><stop offset="0.655" stop-color="#0279e1"/><stop offset="0.705" stop-color="#0370dd"/><stop offset="0.756" stop-color="#0467d8"/><stop offset="0.806" stop-color="#045ed3"/><stop offset="0.856" stop-color="#0556cf"/><stop offset="0.907" stop-color="#054eca"/><stop offset="0.957" stop-color="#0647c5"/><stop offset="1.000" stop-color="#0641c0"/></linearGradient><linearGradient id="g44" x1="0" x2="1" y1="0" y2="0"><stop offset="0.000" stop-color="#02b0fe"/><stop offset="0.050" stop-color="#01b5fe"/><stop offset="0.101" stop-color="#01b7fe"/><stop offset="0.151" stop-color="#00b7fe"/><stop offset="0.201" stop-color="#00b6fc"/><stop offset="0.252" stop-color="#00b3fb"/><stop offset="0.302" stop-color="#00aff9"/><stop offset="0.353" stop-color="#00aaf6"/><stop offset="0.403" stop-color="#00a3f4"/><stop offset="0.453" stop-color="#019cf0"/><stop offset="0.504" stop-color="#0194ed"/><stop offset="0.554" stop-color="#018be9"/><stop offset="0.604" stop-color="#0283e5"/><stop offset="0.655" stop-color="#0279e1"/><stop offset="0.705" stop-color="#0370dd"/><stop offset="0.756" stop-color="#0467d8"/><stop offset="0.806" stop-color="#045ed3"/><stop offset="0.856" stop-color="#0556ce"/><stop offset="0.907" stop-color="#054ec9"/><stop offset="0.957" stop-color="#0547c4"/><stop offset="1.000" stop-color="#0641c0"/></linearGradient><linearGradient id="g45" x1="0" x2="1" y1="0" y2="0"><stop offset="0.000" stop-color="#02b1fe"/><stop offset="0.050" stop-color="#01b5fe"/><stop offset="0.101" stop-color="#01b7fe"/><stop offset="0.151" stop-color="#00b7fd"/><stop offset="0.201" stop-color="#00b6fc"/><stop offset="0.252" stop-color="#00b3fb"/><stop offset="0.302" stop-color="#00aff9"/><stop offset="0.353" stop-color="#00aaf6"/><stop offset="0.403" stop-color="#00a3f3"/><stop offset="0.453" stop-color="#019cf0"/><stop offset="0.504" stop-color="#0194ed"/><stop offset="0.554" stop-color="#018be9"/><stop offset="0.604" stop-color="#0283e5"/><stop offset="0.655" stop-color="#0279e1"/><stop offset="0.705" stop-color="#0370dc"/><stop offset="0.756" stop-color="#0367d8"/><stop offset="0.806" stop-color="#045ed3"/><stop offset="0.856" stop-color="#0556ce"/><stop offset="0.907" stop-color="#054ec9"/><stop offset="0.957" stop-color="#0546c4"/><stop offset="1.000" stop-color="#0641c0"/></linearGradient><linearGradient id="g46" x1="0" x2="1" y1="0" y2="0"><stop offset="0.000" stop-color="#02b1fd"/><stop offset="0.050" stop-color="#01b5fe"/><stop offset="0.101" stop-color="#00b7fe"/><stop offset="0.151" stop-color="#00b8fd"/><stop offset="0.201" stop-color="#00b6fc"/><stop offset="0.252" stop-color="#00b3fa"/><stop offset="0.302" stop-color="#00aff8"/><stop offset="0.353" stop-color="#00aaf6"/><stop offset="0.403" stop-color="#00a3f3"/><stop offset="0.453" stop-color="#019cf0"/><stop offset="0.504" stop-color="#0194ec"/><stop offset="0.554" stop-color="#018be9"/><stop offset="0.604" stop-color="#0282e5"/><stop offset="0.655" stop-color="#0279e0"/><stop offset="0.705" stop-color="#0370dc"/><stop offset="0.756" stop-color="#0367d7"/><stop offset="0.806" stop-color="#045ed2"/><stop offset="0.856" stop-color="#0455ce"/><stop offset="0.907" stop-color="#054dc9"/><stop offset="0.957" stop-color="#0546c4"/><stop offset="1.000" stop-color="#0641bf"/></linearGradient><linearGradient id="g47" x1="0" x2="1" y1="0" y2="0"><stop offset="0.000" stop-color="#02b1fd"/><stop offset="0.050" stop-color="#01b5fe"/><stop offset="0.101" stop-color="#00b7fd"/><stop offset="0.151" stop-color="#00b8fd"/><stop offset="0.201" stop-color="#00b6fc"/><stop offset="0.252" stop-color="#00b3fa"/><stop offset="0.302" stop-color="#00aff8"/><stop offset="0.353" stop-color="#00aaf6"/><stop offset="0.403" stop-color="#00a3f3"/><stop offset="0.453" stop-color="#019cf0"/><stop offset="0.504" stop-color="#0194ec"/><stop offset="0.554" stop-color="#018be8"/><stop offset="0.604" stop-color="#0282e4"/><stop offset="0.655" stop-color="#0279e0"/><stop offset="0.705" stop-color="#0370dc"/><stop offset="0.756" stop-color="#0367d7"/><stop offset="0.806" stop-color="#045ed2"/><stop offset="0.856" stop-color="#0455cd"/><stop offset="0.907" stop-color="#054dc8"/><stop offset="0.957" stop-color="#0546c3"/><stop offset="1.000" stop-color="#0640bf"/></linearGradient><linearGradient id="g48" x1="0" x2="1" y1="0" y2="0"><stop offset="0.000" stop-color="#02b1fd"/><stop offset="0.050" stop-color="#01b5fd"/><stop offset="0.101" stop-color="#00b8fd"/><stop offset="0.151" stop-color="#00b8fd"/><stop offset="0.201" stop-color="#00b6fb"/><stop offset="0.252" stop-color="#00b4fa"/><stop offset="0.302" stop-color="#00aff8"/><stop offset="0.353" stop-color="#00aaf5"/><stop offset="0.403" stop-color="#00a3f2"/><stop offset="0.453" stop-color="#019cef"/><stop offset="0.504" stop-color="#0194ec"/><stop offset="0.554" stop-color="#018be8"/><stop offset="0.604" stop-color="#0282e4"/><stop offset="0.655" stop-color="#0279e0"/><stop offset="0.705" stop-color="#0370db"/><stop offset="0.756" stop-color="#0367d6"/><stop offset="0.806" stop-color="#045ed2"/><stop offset="0.856" stop-color="#0455cd"/><stop offset="0.907" stop-color="#054dc8"/><stop offset="0.957" stop-color="#0546c3"/><stop offset="1.000" stop-color="#0640be"/></linearGradient><linearGradient id="g49" x1="0" x2="1" y1="0" y2="0"><stop offset="0.000" stop-color="#01b2fd"/><stop offset="0.050" stop-color="#01b6fd"/><stop offset="0.101" stop-color="#00b8fd"/><stop offset="0.151" stop-color="#00b8fc"/><stop offset="0.201" stop-color="#00b7fb"/><stop offset="0.252" stop-color="#00b4fa"/><stop offset="0.302" stop-color="#00aff7"/><stop offset="0.353" stop-color="#00aaf5"/><stop offset="0.403" stop-color="#00a3f2"/><stop offset="0.453" stop-color="#009cef"/><stop offset="0.504" stop-color="#0194eb"/><stop offset="0.554" stop-color="#018be8"/><stop offset="0.604" stop-color="#0282e4"/><stop offset="0.655" stop-color="#0279df"/><stop offset="0.705" stop-color="#0370db"/><stop offset="0.756" stop-color="#0366d6"/><stop offset="0.806" stop-color="#045dd1"/><stop offset="0.856" stop-color="#0455cc"/><stop offset="0.907" stop-color="#054dc7"/><stop offset="0.957" stop-color="#0545c2"/><stop offset="1.000" stop-color="#0640be"/></linearGradient><linearGradient id="g50" x1="0" x2="1" y1="0" y2="0"><stop offset="0.000" stop-color="#01b2fc"/><stop offset="0.050" stop-color="#01b6fd"/><stop offset="0.101" stop-color="#00b8fd"/><stop offset="0.151" stop-color="#00b8fc"/><stop offset="0.201" stop-color="#00b7fb"/><stop offset="0.252" stop-color="#00b4f9"/><stop offset="0.302" stop-color="#00aff7"/><stop offset="0.353" stop-color="#00aaf5"/><stop offset="0.403" stop-color="#00a3f2"/><stop offset="0.453" stop-color="#009cef"/><stop offset="0.504" stop-color="#0194eb"/><stop offset="0.554" stop-color="#018be7"/><stop offset="0.604" stop-color="#0282e3"/><stop offset="0.655" stop-color="#0279df"/><stop offset="0.705" stop-color="#0370da"/><stop offset="0.756" stop-color="#0366d6"/><stop offset="0.806" stop-color="#045dd1"/><stop offset="0.856" stop-color="#0455cc"/><stop offset="0.907" stop-color="#054dc7"/><stop offset="0.957" stop-color="#0545c2"/><stop offset="1.000" stop-color="#0640bd"/></linearGradient><linearGradient id="g51" x1="0" x2="1" y1="0" y2="0"><stop offset="0.000" stop-color="#01b2fc"/><stop offset="0.050" stop-color="#01b6fd"/><stop offset="0.101" stop-color="#00b8fc"/><stop offset="0.151" stop-color="#00b8fc"/><stop offset="0.201" stop-color="#00b7fb"/><stop offset="0.252" stop-color="#00b4f9"/><stop offset="0.302" stop-color="#00aff7"/><stop offset="0.353" stop-color="#00aaf4"/><stop offset="0.403" stop-color="#00a3f1"/><stop offset="0.453" stop-color="#009cee"/><stop offset="0.504" stop-color="#0194eb"/><stop offset="0.554" stop-color="#018be7"/><stop offset="0.604" stop-color="#0282e3"/><stop offset="0.655" stop-color="#0279de"/><stop offset="0.705" stop-color="#036fda"/><stop offset="0.756" stop-color="#0366d5"/><stop offset="0.806" stop-color="#045dd0"/><stop offset="0.856" stop-color="#0454cb"/><stop offset="0.907" stop-color="#054cc6"/><stop offset="0.957" stop-color="#0545c1"/><stop offset="1.000" stop-color="#063fbd"/></linearGradient><linearGradient id="g52" x1="0" x2="1" y1="0" y2="0"><stop offset="0.000" stop-color="#01b2fc"/><stop offset="0.050" stop-color="#01b6fc"/><stop offset="0.101" stop-color="#00b8fc"/><stop offset="0.151" stop-color="#00b8fb"/><stop offset="0.201" stop-color="#00b7fa"/><stop offset="0.252" stop-color="#00b4f9"/><stop offset="0.302" stop-color="#00b0f6"/><stop offset="0.353" stop-color="#00aaf4"/><stop offset="0.403" stop-color="#00a3f1"/><stop offset="0.453" stop-color="#009cee"/><stop offset="0.504" stop-color="#0194ea"/><stop offset="0.554" stop-color="#018be6"/><stop offset="0.604" stop-color="#0282e2"/><stop offset="0.655" stop-color="#0279de"/><stop offset="0.705" stop-color="#036fda"/><stop offset="0.756" stop-color="#0366d5"/><stop offset="0.806" stop-color="#045dd0"/><stop offset="0.856" stop-color="#0454cb"/><stop offset="0.907" stop-color="#054cc6"/><stop offset="0.957" stop-color="#0545c1"/><stop offset="1.000" stop-color="#063fbd"/></linearGradient><linearGradient id="g53" x1="0" x2="1" y1="0" y2="0"><stop offset="0.000" stop-color="#01b2fc"/><stop offset="0.050" stop-color="#01b6fc"/><stop offset="0.101" stop-color="#00b8fc"/><stop offset="0.151" stop-color="#00b8fb"/><stop offset="0.201" stop-color="#00b7fa"/><stop offset="0.252" stop-color="#00b4f8"/><stop offset="0.302" stop-color="#00b0f6"/><stop offset="0.353" stop-color="#00aaf4"/><stop offset="0.403" stop-color="#00a3f1"/><stop offset="0.453" stop-color="#009ced"/><stop offset="0.504" stop-color="#0194ea"/><stop offset="0.554" stop-color="#018be6"/><stop offset="0.604" stop-color="#0282e2"/><stop offset="0.655" stop-color="#0278de"/><stop offset="0.705" stop-color="#036fd9"/><stop offset="0.756" stop-color="#0366d4"/><stop offset="0.806" stop-color="#045dd0"/><stop offset="0.856" stop-color="#0454cb"/><stop offset="0.907" stop-color="#054cc6"/><stop offset="0.957" stop-color="#0544c0"/><stop offset="1.000" stop-color="#053fbc"/></linearGradient><linearGradient id="g54" x1="0" x2="1" y1="0" y2="0"><stop offset="0.000" stop-color="#01b3fb"/><stop offset="0.050" stop-color="#01b7fc"/><stop offset="0.101" stop-color="#00b8fb"/><stop offset="0.151" stop-color="#00b9fb"/><stop offset="0.201" stop-color="#00b7fa"/><stop offset="0.252" stop-color="#00b4f8"/><stop offset="0.302" stop-color="#00b0f6"/><stop offset="0.353" stop-color="#00aaf3"/><stop offset="0.403" stop-color="#00a3f0"/><stop offset="0.453" stop-color="#009ced"/><stop offset="0.504" stop-color="#0194e9"/><stop offset="0.554" stop-color="#018be6"/><stop offset="0.604" stop-color="#0282e2"/><stop offset="0.655" stop-color="#0278dd"/><stop offset="0.705" stop-color="#036fd9"/><stop offset="0.756" stop-color="#0365d4"/><stop offset="0.806" stop-color="#045ccf"/><stop offset="0.856" stop-color="#0454ca"/><stop offset="0.907" stop-color="#054bc5"/><stop offset="0.957" stop-color="#0544c0"/><stop offset="1.000" stop-color="#053ebc"/></linearGradient><linearGradient id="g55" x1="0" x2="1" y1="0" y2="0"><stop offset="0.000" stop-color="#01b3fb"/><stop offset="0.050" stop-color="#01b7fb"/><stop offset="0.101" stop-color="#00b9fb"/><stop offset="0.151" stop-color="#00b9fa"/><stop offset="0.201" stop-color="#00b7f9"/><stop offset="0.252" stop-color="#00b4f7"/><stop offset="0.302" stop-color="#00b0f5"/><stop offset="0.353" stop-color="#00aaf3"/><stop offset="0.403" stop-color="#00a3f0"/><stop offset="0.453" stop-color="#009ced"/><stop offset="0.504" stop-color="#0194e9"/><stop offset="0.554" stop-color="#018be5"/><stop offset="0.604" stop-color="#0182e1"/><stop offset="0.655" stop-color="#0278dd"/><stop offset="0.705" stop-color="#026fd8"/><stop offset="0.756" stop-color="#0365d3"/><stop offset="0.806" stop-color="#045ccf"/><stop offset="0.856" stop-color="#0453ca"/><stop offset="0.907" stop-color="#054bc5"/><stop offset="0.957" stop-color="#0544bf"/><stop offset="1.000" stop-color="#053ebb"/></linearGradient><linearGradient id="g56" x1="0" x2="1" y1="0" y2="0"><stop offset="0.000" stop-color="#01b3fb"/><stop offset="0.050" stop-color="#00b7fb"/><stop offset="0.101" stop-color="#00b9fb"/><stop offset="0.151" stop-color="#00b9fa"/><stop offset="0.201" stop-color="#00b7f9"/><stop offset="0.252" stop-color="#00b4f7"/><stop offset="0.302" stop-color="#00b0f5"/><stop offset="0.353" stop-color="#00aaf2"/><stop offset="0.403" stop-color="#00a3ef"/><stop offset="0.453" stop-color="#009cec"/><stop offset="0.504" stop-color="#0093e9"/><stop offset="0.554" stop-color="#018be5"/><stop offset="0.604" stop-color="#0181e1"/><stop offset="0.655" stop-color="#0278dc"/><stop offset="0.705" stop-color="#026ed8"/><stop offset="0.756" stop-color="#0365d3"/><stop offset="0.806" stop-color="#035cce"/><stop offset="0.856" stop-color="#0453c9"/><stop offset="0.907" stop-color="#054bc4"/><stop offset="0.957" stop-color="#0543bf"/><stop offset="1.000" stop-color="#053eba"/></linearGradient><linearGradient id="g57" x1="0" x2="1" y1="0" y2="0"><stop offset="0.000" stop-color="#01b3fa"/><stop offset="0.050" stop-color="#00b7fb"/><stop offset="0.101" stop-color="#00b9fa"/><stop offset="0.151" stop-color="#00b9fa"/><stop offset="0.201" stop-color="#00b7f8"/><stop offset="0.252" stop-color="#00b4f7"/><stop offset="0.302" stop-color="#00b0f5"/><stop offset="0.353" stop-color="#00aaf2"/><stop offset="0.403" stop-color="#00a3ef"/><stop offset="0.453" stop-color="#009cec"/><stop offset="0.504" stop-color="#0093e8"/><stop offset="0.554" stop-color="#018ae4"/><stop offset="0.604" stop-color="#0181e0"/><stop offset="0.655" stop-color="#0278dc"/><stop offset="0.705" stop-color="#026ed7"/><stop offset="0.756" stop-color="#0365d2"/><stop offset="0.806" stop-color="#035cce"/><stop offset="0.856" stop-color="#0453c9"/><stop offset="0.907" stop-color="#044bc3"/><stop offset="0.957" stop-color="#0543be"/><stop offset="1.000" stop-color="#053dba"/></linearGradient><linearGradient id="g58" x1="0" x2="1" y1="0" y2="0"><stop offset="0.000" stop-color="#01b3fa"/><stop offset="0.050" stop-color="#00b7fa"/><stop offset="0.101" stop-color="#00b9fa"/><stop offset="0.151" stop-color="#00b9f9"/><stop offset="0.201" stop-color="#00b7f8"/><stop offset="0.252" stop-color="#00b4f6"/><stop offset="0.302" stop-color="#00b0f4"/><stop offset="0.353" stop-color="#00aaf2"/><stop offset="0.403" stop-color="#00a3ef"/><stop offset="0.453" stop-color="#009beb"/><stop offset="0.504" stop-color="#0093e8"/><stop offset="0.554" stop-color="#018ae4"/><stop offset="0.604" stop-color="#0181e0"/><stop offset="0.655" stop-color="#0278db"/><stop offset="0.705" stop-color="#026ed7"/><stop offset="0.756" stop-color="#0364d2"/><stop offset="0.806" stop-color="#035bcd"/><stop offset="0.856" stop-color="#0452c8"/><stop offset="0.907" stop-color="#044ac3"/><stop offset="0.957" stop-color="#0543be"/><stop offset="1.000" stop-color="#053db9"/></linearGradient><linearGradient id="g59" x1="0" x2="1" y1="0" y2="0"><stop offset="0.000" stop-color="#01b3fa"/><stop offset="0.050" stop-color="#00b7fa"/><stop offset="0.101" stop-color="#00b9fa"/><stop offset="0.151" stop-color="#00b9f9"/><stop offset="0.201" stop-color="#00b7f8"/><stop offset="0.252" stop-color="#00b4f6"/><stop offset="0.302" stop-color="#00aff4"/><stop offset="0.353" stop-color="#00aaf1"/><stop offset="0.403" stop-color="#00a3ee"/><stop offset="0.453" stop-color="#009beb"/><stop offset="0.504" stop-color="#0093e7"/><stop offset="0.554" stop-color="#018ae3"/><stop offset="0.604" stop-color="#0181df"/><stop offset="0.655" stop-color="#0277db"/><stop offset="0.705" stop-color="#026ed6"/><stop offset="0.756" stop-color="#0364d1"/><stop offset="0.806" stop-color="#035bcc"/><stop offset="0.856" stop-color="#0452c7"/><stop offset="0.907" stop-color="#044ac2"/><stop offset="0.957" stop-color="#0542bd"/><stop offset="1.000" stop-color="#053db9"/></linearGradient><linearGradient id="g60" x1="0" x2="1" y1="0" y2="0"><stop offset="0.000" stop-color="#01b3f9"/><stop offset="0.050" stop-color="#00b7f9"/><stop offset="0.101" stop-color="#00b9f9"/><stop offset="0.151" stop-color="#00b9f8"/><stop offset="0.201" stop-color="#00b7f7"/><stop offset="0.252" stop-color="#00b4f5"/><stop offset="0.302" stop-color="#00aff3"/><stop offset="0.353" stop-color="#00aaf1"/><stop offset="0.403" stop-color="#00a3ee"/><stop offset="0.453" stop-color="#009bea"/><stop offset="0.504" stop-color="#0093e7"/><stop offset="0.554" stop-color="#018ae3"/><stop offset="0.604" stop-color="#0181df"/><stop offset="0.655" stop-color="#0277da"/><stop offset="0.705" stop-color="#026dd6"/><stop offset="0.756" stop-color="#0364d1"/><stop offset="0.806" stop-color="#035bcc"/><stop offset="0.856" stop-color="#0452c7"/><stop offset="0.907" stop-color="#0449c2"/><stop offset="0.957" stop-color="#0542bd"/><stop offset="1.000" stop-color="#053cb8"/></linearGradient></defs><rect x="0" y="0" width="1906" height="17" fill="url(#g0)"/><rect x="0" y="16" width="1906" height="17" fill="url(#g1)"/><rect x="0" y="32" width="1906" height="17" fill="url(#g2)"/><rect x="0" y="48" width="1906" height="17" fill="url(#g3)"/><rect x="0" y="64" width="1906" height="17" fill="url(#g4)"/><rect x="0" y="80" width="1906" height="17" fill="url(#g5)"/><rect x="0" y="96" width="1906" height="17" fill="url(#g6)"/><rect x="0" y="112" width="1906" height="17" fill="url(#g7)"/><rect x="0" y="128" width="1906" height="17" fill="url(#g8)"/><rect x="0" y="144" width="1906" height="17" fill="url(#g9)"/><rect x="0" y="160" width="1906" height="17" fill="url(#g10)"/><rect x="0" y="176" width="1906" height="17" fill="url(#g11)"/><rect x="0" y="192" width="1906" height="17" fill="url(#g12)"/><rect x="0" y="208" width="1906" height="17" fill="url(#g13)"/><rect x="0" y="224" width="1906" height="17" fill="url(#g14)"/><rect x="0" y="240" width="1906" height="17" fill="url(#g15)"/><rect x="0" y="256" width="1906" height="17" fill="url(#g16)"/><rect x="0" y="272" width="1906" height="17" fill="url(#g17)"/><rect x="0" y="288" width="1906" height="17" fill="url(#g18)"/><rect x="0" y="304" width="1906" height="17" fill="url(#g19)"/><rect x="0" y="320" width="1906" height="17" fill="url(#g20)"/><rect x="0" y="336" width="1906" height="17" fill="url(#g21)"/><rect x="0" y="352" width="1906" height="17" fill="url(#g22)"/><rect x="0" y="368" width="1906" height="17" fill="url(#g23)"/><rect x="0" y="384" width="1906" height="17" fill="url(#g24)"/><rect x="0" y="400" width="1906" height="17" fill="url(#g25)"/><rect x="0" y="416" width="1906" height="17" fill="url(#g26)"/><rect x="0" y="432" width="1906" height="17" fill="url(#g27)"/><rect x="0" y="448" width="1906" height="17" fill="url(#g28)"/><rect x="0" y="464" width="1906" height="17" fill="url(#g29)"/><rect x="0" y="480" width="1906" height="17" fill="url(#g30)"/><rect x="0" y="496" width="1906" height="17" fill="url(#g31)"/><rect x="0" y="512" width="1906" height="17" fill="url(#g32)"/><rect x="0" y="528" width="1906" height="17" fill="url(#g33)"/><rect x="0" y="544" width="1906" height="17" fill="url(#g34)"/><rect x="0" y="560" width="1906" height="17" fill="url(#g35)"/><rect x="0" y="576" width="1906" height="17" fill="url(#g36)"/><rect x="0" y="592" width="1906" height="17" fill="url(#g37)"/><rect x="0" y="608" width="1906" height="17" fill="url(#g38)"/><rect x="0" y="624" width="1906" height="17" fill="url(#g39)"/><rect x="0" y="640" width="1906" height="17" fill="url(#g40)"/><rect x="0" y="656" width="1906" height="17" fill="url(#g41)"/><rect x="0" y="672" width="1906" height="17" fill="url(#g42)"/><rect x="0" y="688" width="1906" height="17" fill="url(#g43)"/><rect x="0" y="704" width="1906" height="17" fill="url(#g44)"/><rect x="0" y="720" width="1906" height="17" fill="url(#g45)"/><rect x="0" y="736" width="1906" height="17" fill="url(#g46)"/><rect x="0" y="752" width="1906" height="17" fill="url(#g47)"/><rect x="0" y="768" width="1906" height="17" fill="url(#g48)"/><rect x="0" y="784" width="1906" height="17" fill="url(#g49)"/><rect x="0" y="800" width="1906" height="17" fill="url(#g50)"/><rect x="0" y="816" width="1906" height="17" fill="url(#g51)"/><rect x="0" y="832" width="1906" height="17" fill="url(#g52)"/><rect x="0" y="848" width="1906" height="17" fill="url(#g53)"/><rect x="0" y="864" width="1906" height="17" fill="url(#g54)"/><rect x="0" y="880" width="1906" height="17" fill="url(#g55)"/><rect x="0" y="896" width="1906" height="17" fill="url(#g56)"/><rect x="0" y="912" width="1906" height="17" fill="url(#g57)"/><rect x="0" y="928" width="1906" height="17" fill="url(#g58)"/><rect x="0" y="944" width="1906" height="17" fill="url(#g59)"/><rect x="0" y="960" width="1906" height="17" fill="url(#g60)"/><filter id="pb" x="-10%" y="-10%" width="120%" height="120%"><feGaussianBlur stdDeviation="10"/></filter><polygon points="309,0 1906,0 1906,443.2" fill="#001e62" opacity="0.05" filter="url(#pb)"/><defs><linearGradient id="lg" x1="309" y1="0" x2="1150" y2="233.4" gradientUnits="userSpaceOnUse"><stop offset="0" stop-color="#00c8ff" stop-opacity="0.15"/><stop offset="0.4" stop-color="#00c8ff" stop-opacity="0.4"/><stop offset="1" stop-color="#00c8ff" stop-opacity="0.3"/></linearGradient><filter id="bl" x="-5%" y="-50%" width="110%" height="200%"><feGaussianBlur stdDeviation="1.2"/></filter><radialGradient id="glow" cx="0.5" cy="0.5" r="0.5"><stop offset="0" stop-color="#1a6cff" stop-opacity="0.55"/><stop offset="1" stop-color="#1a6cff" stop-opacity="0"/></radialGradient></defs><line x1="309" y1="0" x2="1200" y2="247.3" stroke="url(#lg)" stroke-width="3.5" filter="url(#bl)"/><ellipse cx="1590" cy="430" rx="55" ry="190" fill="url(#glow)"/></svg>
<svg style="left:8px;top:-27px" width="48" height="48" viewBox="0 0 48 48"><path d="M8 0h36.4v35.3L26 29.5 8 24z" fill="#3a9ff2"/><path d="M44.4 0v35.3" stroke="#6f7a88" stroke-width="1.3"/><path d="M18 26.8l26.4 8.5" stroke="#4a5f80" stroke-width="1.2"/><path d="M2.6 38.8l9.1-4.3 24.3 8.2-9.4 4z" fill="#e9ebef" stroke="#b0a0a0" stroke-width=".5"/><g stroke="#c5c5cc" stroke-width=".45"><path d="M6 37.3l24.3 8.2M8.5 36.2l24.3 8.2M11 35.1l24.3 8.2M7 40l5-2.4M12 41.7l5-2.4M17 43.4l5-2.4M22 45.1l5-2.4"/></g><path d="M21 32.5l6.5-.8 12.5 3.8-4 3.3z" fill="#dedfe3" stroke="#a89a98" stroke-width=".5"/></svg><div class="dl" style="left:-14px;top:26px;width:92px">此电脑</div><svg style="left:84px;top:-27px" width="48" height="48" viewBox="0 0 48 48"><circle cx="23.9" cy="24.7" r="22.6" fill="#fff"/><circle cx="23.9" cy="24.7" r="21" fill="#050505"/><circle cx="23.9" cy="24.7" r="12.2" fill="#d62d16"/><g transform="translate(0,36)"><rect x="0.5" y="0.5" width="12" height="12" fill="#fdfdfd" stroke="#dcd4d4" stroke-width="1"/><path d="M4.3 2.6h6.2v6.2L8.7 7.1C7 8 6.2 9.6 5.9 11.8 4.7 11 4 9.6 4.2 8 4.4 6.6 5.3 5.4 6.7 4.9z" fill="#2d5ea8"/><path d="M6.7 4.9L4.3 2.6h6.2z" fill="#3a70b8"/></g></svg><div class="dl" style="left:62px;top:26px;width:92px">Bandicam</div><svg style="left:160px;top:-27px" width="48" height="48" viewBox="0 0 48 48"><path d="M1 20h46v9l-15.3 12.6-7.8 7.1-7.9-7.1L1 30z" fill="#e0703c"/><path d="M2 20h22l-1 21.6-6-1-14-9z" fill="#d88850"/><path d="M30 20h17v10l-14 11-6-1z" fill="#f2cc20"/><path d="M30 36l6-5 6-3-4 8-6 5z" fill="#f0a020"/><path d="M5 20q3 14 19 17.2q13-1 17.5-17.2z" fill="#6a7f4c"/><path d="M13 20q2 13 11 14.9q11-1 16-14.9z" fill="#f2f2f0"/><ellipse cx="26" cy="26" rx="7.5" ry="7.3" fill="#4a2e26"/><path d="M44 20h4v8l-3 1z" fill="#e04a2a"/><g transform="translate(0,36)"><rect x="0.5" y="0.5" width="12" height="12" fill="#fdfdfd" stroke="#dcd4d4" stroke-width="1"/><path d="M4.3 2.6h6.2v6.2L8.7 7.1C7 8 6.2 9.6 5.9 11.8 4.7 11 4 9.6 4.2 8 4.4 6.6 5.3 5.4 6.7 4.9z" fill="#2d5ea8"/><path d="M6.7 4.9L4.3 2.6h6.2z" fill="#3a70b8"/></g></svg><div class="dl" style="left:138px;top:26px;width:92px">FSViewer....</div><svg style="left:236px;top:-27px" width="48" height="48" viewBox="0 0 48 48"><path d="M11.6 0v26a3.4 3.4 0 0 0 3.4 3.4h29.5a3.4 3.4 0 0 0 3.4-3.4V0h-7v29.4" fill="none"/><path d="M15 0h33v30.8a6 6 0 0 1-6 6H17.6a6 6 0 0 1-6-6V0h6.4v29.4h23.5V0z" fill="#1c9ad6"/><path d="M0 0h6.9v41.6h22.8V0h6.7v42.7a6 6 0 0 1-6 6H6a6 6 0 0 1-6-6z" fill="#f1a216"/><g transform="translate(0,36)"><rect x="0.5" y="0.5" width="12" height="12" fill="#fdfdfd" stroke="#dcd4d4" stroke-width="1"/><path d="M4.3 2.6h6.2v6.2L8.7 7.1C7 8 6.2 9.6 5.9 11.8 4.7 11 4 9.6 4.2 8 4.4 6.6 5.3 5.4 6.7 4.9z" fill="#2d5ea8"/><path d="M6.7 4.9L4.3 2.6h6.2z" fill="#3a70b8"/></g></svg><div class="dl" style="left:214px;top:26px;width:92px">vm16</div><svg style="left:8px;top:74px" width="48" height="48" viewBox="0 0 48 48"><g transform="translate(0,2.5)"><path d="M2 4l44-3 1 40-44 3z" fill="#2f7ef0"/><path d="M4 5l40-2.5 .8 37-40 2.5z" fill="#3a8cf5"/><path d="M6 6.5l36-2 .7 33-36 2z" fill="none" stroke="#cfe3ff" stroke-width="1"/><g stroke="#b9d6ff" stroke-width=".6" fill="none"><path d="M38 10v22M36.5 10h3M36.5 32h3M9 24v8M7.5 24h3M7.5 32h3M15 36h15M15 34.5v3M30 34.5v3"/></g><path d="M12 18q0-9 11.5-9q11.5 0 11.5 9q0 4-3 6v6h-17v-6q-3-2-3-6z" fill="#e9f2f6"/><path d="M15 23h17v8h-17z" fill="#f7fbfd" stroke="#c8d8e0" stroke-width=".5"/><path d="M18 27h11" stroke="#5a8ad8" stroke-width="1.2"/></g><g transform="translate(0,36)"><rect x="0.5" y="0.5" width="12" height="12" fill="#fdfdfd" stroke="#dcd4d4" stroke-width="1"/><path d="M4.3 2.6h6.2v6.2L8.7 7.1C7 8 6.2 9.6 5.9 11.8 4.7 11 4 9.6 4.2 8 4.4 6.6 5.3 5.4 6.7 4.9z" fill="#2d5ea8"/><path d="M6.7 4.9L4.3 2.6h6.2z" fill="#3a70b8"/></g></svg><div class="dl" style="left:-14px;top:127px;width:92px">PxCook</div><svg style="left:84px;top:74px" width="48" height="48" viewBox="0 0 48 48"><path d="M3 6.4h9.5v37.4H3z" fill="#4a1a12"/><path d="M4.5 8h6.5v34H4.5z" fill="#3a1410"/><path d="M6.5 12h2.5v26H6.5z" fill="#b8602a"/><path d="M12.5 12.7h8v31.1h-8z" fill="#3a3a44"/><path d="M14 14.5h5v27.5h-5z" fill="#5a5f6a"/><path d="M20.5 9.6h10.5v34.2H20.5z" fill="#7a7078"/><path d="M22 11h7.5v31h-7.5z" fill="#8e8590"/><path d="M26 5l4-1 7.5 39-4 1z" fill="#d8a868"/><path d="M27.5 6l1.5-.3 7 36.5-1.5.3z" fill="#b8884a"/><path d="M31 17l6.5-2 9.3 28-6.5 2z" fill="#3a70b8"/><path d="M32.8 18l3.5-1 8 25.5-3.5 1z" fill="#5a96d8"/><g transform="translate(0,36)"><rect x="0.5" y="0.5" width="12" height="12" fill="#fdfdfd" stroke="#dcd4d4" stroke-width="1"/><path d="M4.3 2.6h6.2v6.2L8.7 7.1C7 8 6.2 9.6 5.9 11.8 4.7 11 4 9.6 4.2 8 4.4 6.6 5.3 5.4 6.7 4.9z" fill="#2d5ea8"/><path d="M6.7 4.9L4.3 2.6h6.2z" fill="#3a70b8"/></g></svg><div class="dl" style="left:62px;top:127px;width:92px">CalibrePor...</div><svg style="left:160px;top:74px" width="48" height="48" viewBox="0 0 48 48"><rect x="0" y="7" width="48" height="27" fill="#6e6e78"/><rect x="1.8" y="8.8" width="44.4" height="23.4" fill="#fff"/><text x="24" y="27.5" text-anchor="middle" font-family="Liberation Sans" font-size="16" fill="#3a3a3a" letter-spacing=".5">S&gt;G</text><rect x="18.5" y="34" width="11" height="7" fill="#6e6e78"/><rect x="13" y="41" width="23" height="3" fill="#6e6e78"/><g transform="translate(0,36)"><rect x="0.5" y="0.5" width="12" height="12" fill="#fdfdfd" stroke="#dcd4d4" stroke-width="1"/><path d="M4.3 2.6h6.2v6.2L8.7 7.1C7 8 6.2 9.6 5.9 11.8 4.7 11 4 9.6 4.2 8 4.4 6.6 5.3 5.4 6.7 4.9z" fill="#2d5ea8"/><path d="M6.7 4.9L4.3 2.6h6.2z" fill="#3a70b8"/></g></svg><div class="dl" style="left:138px;top:127px;width:92px">gif</div><svg style="left:236px;top:74px" width="48" height="48" viewBox="0 0 48 48"><g transform="translate(0.5,1.6) scale(0.47)"><path d="M96.5 10.8L75.9.9C73.5-.3 70.7.2 68.8 2.1L29.4 38.1 12.2 25.1C10.6 23.9 8.4 24 6.9 25.3L1.4 30.3C-.4 32-.4 34.8 1.4 36.5L16.3 50 1.4 63.5C-.4 65.2-.4 68 1.4 69.7L6.9 74.7C8.4 76 10.6 76.1 12.2 74.9L29.4 61.9 68.8 97.9C70.7 99.8 73.5 100.3 75.9 99.1L96.5 89.2C98.7 88.2 100 86 100 83.6V16.4C100 14 98.7 11.8 96.5 10.8ZM75 72.7L45.1 50 75 27.3Z" fill="#1f86d4"/><path d="M1.4 63.5C-.4 65.2-.4 68 1.4 69.7L6.9 74.7C8.4 76 10.6 76.1 12.2 74.9L75 27.3V2C73 .3 70.6.3 68.8 2.1z" fill="#1a74bf"/><path d="M75 .5L96.5 10.8C98.7 11.8 100 14 100 16.4V83.6C100 86 98.7 88.2 96.5 89.2L75 99.5z" fill="#3aa3f2"/></g><g transform="translate(0,36)"><rect x="0.5" y="0.5" width="12" height="12" fill="#fdfdfd" stroke="#dcd4d4" stroke-width="1"/><path d="M4.3 2.6h6.2v6.2L8.7 7.1C7 8 6.2 9.6 5.9 11.8 4.7 11 4 9.6 4.2 8 4.4 6.6 5.3 5.4 6.7 4.9z" fill="#2d5ea8"/><path d="M6.7 4.9L4.3 2.6h6.2z" fill="#3a70b8"/></g></svg><div class="dl" style="left:214px;top:127px;width:92px">vscode</div><svg style="left:8px;top:175px" width="48" height="48" viewBox="0 0 48 48"><rect x="0" y="0.7" width="47.8" height="47.8" rx="10" fill="#fff"/><path d="M24 5.4c-7 0-12 5-12 12.5 0 2 .3 3.6.8 4.8l-5 9.5c-.6 1.4-.3 4 .7 4.5l3.3-3.5c1 4 3 7 6 9.5l12.6 0c3-2.5 5-5.5 6-9.5l3.3 3.5c1-.5 1.3-3.1.7-4.5l-5-9.5c.5-1.2.8-2.8.8-4.8C36 10.4 31 5.4 24 5.4z" fill="#080808"/><path d="M15 28.5c3.5-.8 14.5-.8 18.4 0 .8 3.5.8 10-1.5 13.5-2 1.6-12.5 1.6-15.2 0-2.3-3.5-2.3-10-1.7-13.5z" fill="#fff"/><ellipse cx="20.8" cy="13.3" rx="2.3" ry="3.3" fill="#fff"/><ellipse cx="27.3" cy="13.3" rx="2.3" ry="3.3" fill="#fff"/><ellipse cx="21.4" cy="13.8" rx="1" ry="1.5" fill="#111"/><path d="M26.2 13.2q1.1-.7 2.2 0" stroke="#111" stroke-width=".8" fill="none"/><ellipse cx="24" cy="19.2" rx="7" ry="2.1" fill="#f4a21a"/><path d="M10.7 23.5q13.4-3 26.8 0l-.5 4q-13-2.5-26 0z" fill="#e0301e"/><path d="M16.5 26.5h5.5v6.8h-5.5z" fill="#e0301e"/><path d="M12.7 43.5q2-2.5 6-2.3l1.5 2.6zM36.3 43.5q-2-2.5-6-2.3l-1.5 2.6z" fill="#f4a21a"/><g transform="translate(0,36)"><rect x="0.5" y="0.5" width="12" height="12" fill="#fdfdfd" stroke="#dcd4d4" stroke-width="1"/><path d="M4.3 2.6h6.2v6.2L8.7 7.1C7 8 6.2 9.6 5.9 11.8 4.7 11 4 9.6 4.2 8 4.4 6.6 5.3 5.4 6.7 4.9z" fill="#2d5ea8"/><path d="M6.7 4.9L4.3 2.6h6.2z" fill="#3a70b8"/></g></svg><div class="dl" style="left:-14px;top:228px;width:92px">QQ</div><svg style="left:84px;top:175px" width="48" height="48" viewBox="0 0 48 48"><path d="M10 3h21l9 9v33a2 2 0 0 1-2 2H10a2 2 0 0 1-2-2V5a2 2 0 0 1 2-2z" fill="#001e36" stroke="#2a8ad8" stroke-width="1"/><text x="24" y="28" text-anchor="middle" font-family="Liberation Sans" font-weight="bold" font-size="18" fill="#31a8ff">Ps</text><text x="24" y="41" text-anchor="middle" font-family="Liberation Sans" font-weight="bold" font-size="8" fill="#fff">PSD</text></svg><div class="dl" style="left:62px;top:228px;width:92px">cover.psd</div><svg style="left:160px;top:175px" width="48" height="48" viewBox="0 0 48 48"><path d="M18 9.4l11 19-6 10.6H2.5z" fill="#746468"/><path d="M35 20l12 19H23.5z" fill="#1a96f0"/><g transform="translate(0,36)"><rect x="0.5" y="0.5" width="12" height="12" fill="#fdfdfd" stroke="#dcd4d4" stroke-width="1"/><path d="M4.3 2.6h6.2v6.2L8.7 7.1C7 8 6.2 9.6 5.9 11.8 4.7 11 4 9.6 4.2 8 4.4 6.6 5.3 5.4 6.7 4.9z" fill="#2d5ea8"/><path d="M6.7 4.9L4.3 2.6h6.2z" fill="#3a70b8"/></g></svg><div class="dl" style="left:138px;top:228px;width:92px">Imagine</div><svg style="left:236px;top:175px" width="48" height="48" viewBox="0 0 48 48"><rect x="2" y="3" width="44" height="44" rx="7" fill="#e34a2c"/><path d="M2 10a7 7 0 0 1 7-7h30a7 7 0 0 1 7 7v9.5H2z" fill="#4a8ac4"/><path d="M12 12q6-6 14-2t-2 8H14z" fill="#3a78b0"/><path d="M36 8q6 2 8 8v3h-8z" fill="#3a70a8"/><path d="M28 14q6-4 10 0l-4 3z" fill="#5a9ae8"/><path d="M2 19.5h44v24H2z" fill="#e34a2c"/><path d="M30 28q10 0 16-6v18H24z" fill="#d63a1e"/><path d="M8 24q8-2 12 2-4 2-12 0z" fill="#e8683a"/><path d="M3 43.5h42q-1 3.5-4 3.5H7q-3 0-4-3.5z" fill="#5a2a20"/><path d="M4 42h40v1.5H4z" fill="#e8e0dc"/><g transform="translate(0,36)"><rect x="0.5" y="0.5" width="12" height="12" fill="#fdfdfd" stroke="#dcd4d4" stroke-width="1"/><path d="M4.3 2.6h6.2v6.2L8.7 7.1C7 8 6.2 9.6 5.9 11.8 4.7 11 4 9.6 4.2 8 4.4 6.6 5.3 5.4 6.7 4.9z" fill="#2d5ea8"/><path d="M6.7 4.9L4.3 2.6h6.2z" fill="#3a70b8"/></g></svg><div class="dl" style="left:214px;top:228px;width:92px">Watermark</div><svg style="left:8px;top:276px" width="48" height="48" viewBox="0 0 48 48"><path d="M8 6l12-0.5 1 2.5 11 0v35l-23 0z" fill="#f5d27a"/><path d="M8 6h10l2 2h12v2H8z" fill="#e9bf55"/><path d="M17 11h13l4 4v27H17z" fill="#f4f4f4" stroke="#d8d8d8" stroke-width=".6"/><path d="M21 13h13l4 4v27H21z" fill="#fafafa" stroke="#d5d5d5" stroke-width=".6"/><circle cx="24.5" cy="32" r="6" fill="#e94235"/><path d="M24.5 32L19.3 29a6 6 0 0 0 2.2 8.2z" fill="#34a853"/><path d="M24.5 32l5.2-3a6 6 0 0 1-8.2 8.2z" fill="#fbbc04"/><circle cx="24.5" cy="32" r="2.6" fill="#fff"/><circle cx="24.5" cy="32" r="2" fill="#4285f4"/><path d="M36 28h2v6h-2z" fill="#f2c230"/><path d="M8 6l8 3v38l-8-3z" fill="#fbe29a"/><path d="M8 6l1 0v38l-1 0z" fill="#e8c060"/></svg><div class="dl" style="left:-14px;top:329px;width:92px">axios</div><svg style="left:84px;top:276px" width="48" height="48" viewBox="0 0 48 48"><rect x="0" y="18" width="45" height="28" fill="#f8f8fa" stroke="#e6e6ea" stroke-width=".5"/><path d="M3 32h39" stroke="#e0c8b0" stroke-width="1.2" stroke-dasharray="2 1"/></svg><div class="dl" style="left:62px;top:329px;width:92px">demo.png</div><svg style="left:160px;top:276px" width="48" height="48" viewBox="0 0 48 48"><path d="M4 2l12-2 10 6-4 18-16 18-6-10z" fill="#f08030"/><path d="M2 20l8-6 8 10-8 18-8-4z" fill="#f0c020"/><path d="M4 2l10 4-6 16z" fill="#e0407a"/><path d="M26 4l12-4 10 12-4 26-14 10-14-6z" fill="#1a8af0"/><path d="M34 6l12 8-6 20z" fill="#40b0f8"/><rect x="9" y="10" width="30" height="30" fill="#000"/><text x="12.5" y="25" font-family="Liberation Mono" font-weight="bold" font-size="14" fill="#fff" letter-spacing="-1">IJ</text><rect x="12" y="34" width="11" height="2" fill="#fff"/><g transform="translate(0,36)"><rect x="0.5" y="0.5" width="12" height="12" fill="#fdfdfd" stroke="#dcd4d4" stroke-width="1"/><path d="M4.3 2.6h6.2v6.2L8.7 7.1C7 8 6.2 9.6 5.9 11.8 4.7 11 4 9.6 4.2 8 4.4 6.6 5.3 5.4 6.7 4.9z" fill="#2d5ea8"/><path d="M6.7 4.9L4.3 2.6h6.2z" fill="#3a70b8"/></g></svg><div class="dl" style="left:138px;top:329px;width:92px">IntelliJ IDEA<br>2024.1</div><svg style="left:236px;top:276px" width="48" height="48" viewBox="0 0 48 48"><defs><clipPath id="xmc"><rect x="0" y="1" width="48" height="47" rx="6"/></clipPath></defs><g clip-path="url(#xmc)"><rect x="0" y="1" width="48" height="47" fill="#d83a22"/><path d="M6 1h42v42z" fill="#e34a2e"/><path d="M18 1h30v30z" fill="#e6673c"/><path d="M31 1h17v17z" fill="#d8884e"/></g><path d="M8 24C16 23.5 21.5 28 23 40" fill="none" stroke="#fff" stroke-width="8.5"/><path d="M26.5 9.5C26 19 31 24.5 40 25.5" fill="none" stroke="#fff" stroke-width="8.5"/><path d="M24 9.5c-1 6 0 10 3 13" fill="none" stroke="#d8d8d8" stroke-width="2.5"/><path d="M17 30c2 3 3 6 3.5 9" fill="none" stroke="#dcdcdc" stroke-width="2.5"/><g transform="translate(0,36)"><rect x="0.5" y="0.5" width="12" height="12" fill="#fdfdfd" stroke="#dcd4d4" stroke-width="1"/><path d="M4.3 2.6h6.2v6.2L8.7 7.1C7 8 6.2 9.6 5.9 11.8 4.7 11 4 9.6 4.2 8 4.4 6.6 5.3 5.4 6.7 4.9z" fill="#2d5ea8"/><path d="M6.7 4.9L4.3 2.6h6.2z" fill="#3a70b8"/></g></svg><div class="dl" style="left:214px;top:329px;width:92px">Xmind</div><svg style="left:8px;top:377px" width="48" height="48" viewBox="0 0 48 48"><path d="M8 6l12-0.5 1 2.5 11 0v35l-23 0z" fill="#f5d27a"/><path d="M8 6h10l2 2h12v2H8z" fill="#e9bf55"/><path d="M17 11h13l4 4v27H17z" fill="#f4f4f4" stroke="#d8d8d8" stroke-width=".6"/><path d="M21 13h13l4 4v27H21z" fill="#fafafa" stroke="#d5d5d5" stroke-width=".6"/><circle cx="24.5" cy="32" r="6" fill="#e94235"/><path d="M24.5 32L19.3 29a6 6 0 0 0 2.2 8.2z" fill="#34a853"/><path d="M24.5 32l5.2-3a6 6 0 0 1-8.2 8.2z" fill="#fbbc04"/><circle cx="24.5" cy="32" r="2.6" fill="#fff"/><circle cx="24.5" cy="32" r="2" fill="#4285f4"/><path d="M36 28h2v6h-2z" fill="#f2c230"/><path d="M8 6l8 3v38l-8-3z" fill="#fbe29a"/><path d="M8 6l1 0v38l-1 0z" fill="#e8c060"/></svg><div class="dl" style="left:-14px;top:430px;width:92px">chatRobot</div><svg style="left:84px;top:377px" width="48" height="48" viewBox="0 0 48 48"><g transform="translate(0,3)"><rect x="5" y="1" width="18" height="11" rx="2.5" fill="#f8f6f2" stroke="#111" stroke-width="1.2"/><text x="14" y="9" text-anchor="middle" font-family="Liberation Sans" font-size="5.5" fill="#555">Main</text><path d="M14 12v29M14 21h17M36 26v16" stroke="#111" stroke-width="1"/><path d="M14 17l4 4-4 4-4-4z" fill="#f5d000" stroke="#111" stroke-width=".6"/><rect x="30" y="17" width="13" height="8" fill="#f8f6f2" stroke="#111" stroke-width="1.2"/><rect x="13" y="37" width="10" height="9" fill="#f8f6f2" stroke="#111" stroke-width="1.2"/><rect x="30" y="36" width="14" height="8" fill="#f8f6f2" stroke="#111" stroke-width="1.2"/></g><g transform="translate(0,36)"><rect x="0.5" y="0.5" width="12" height="12" fill="#fdfdfd" stroke="#dcd4d4" stroke-width="1"/><path d="M4.3 2.6h6.2v6.2L8.7 7.1C7 8 6.2 9.6 5.9 11.8 4.7 11 4 9.6 4.2 8 4.4 6.6 5.3 5.4 6.7 4.9z" fill="#2d5ea8"/><path d="M6.7 4.9L4.3 2.6h6.2z" fill="#3a70b8"/></g></svg><div class="dl" style="left:62px;top:430px;width:92px">DiagramD...</div><svg style="left:160px;top:377px" width="48" height="48" viewBox="0 0 48 48"><path d="M9 7l25-2 10 7v29l-28 3-7-7z" fill="#fff" stroke="#fff" stroke-width="3"/><path d="M9 7l25-2 10 7v29l-28 3-7-7z" fill="#000"/><path d="M16 13l25-1.5v28l-24 2z" fill="#fff"/><text x="29" y="37" text-anchor="middle" font-family="Liberation Serif" font-weight="bold" font-size="22" fill="#000">N</text><g transform="translate(0,36)"><rect x="0.5" y="0.5" width="12" height="12" fill="#fdfdfd" stroke="#dcd4d4" stroke-width="1"/><path d="M4.3 2.6h6.2v6.2L8.7 7.1C7 8 6.2 9.6 5.9 11.8 4.7 11 4 9.6 4.2 8 4.4 6.6 5.3 5.4 6.7 4.9z" fill="#2d5ea8"/><path d="M6.7 4.9L4.3 2.6h6.2z" fill="#3a70b8"/></g></svg><div class="dl" style="left:138px;top:430px;width:92px">Notion</div><svg style="left:236px;top:377px" width="48" height="48" viewBox="0 0 48 48"><path d="M2.3 22.3h13.3a17 17 0 0 0 28 8 18.5 18.5 0 0 1-14 15C20 46 12 42 8 36z" fill="#e04a2a"/><path d="M2.3 22.3h13.3l4 8-10.7 6z" fill="#e8703a"/><path d="M15.6 22.3a17 17 0 0 1 17-14.5 17 17 0 0 1 11.5 5l-8 6a8 8 0 0 0-12 6z" fill="#e8703a"/><path d="M32.6 7.8a18 18 0 0 1 11.5 5.5 18 18 0 0 1 4 10.5h-8a9 9 0 0 0-7.5-8z" fill="#d88c58"/><path d="M15.6 22.3a17 17 0 0 0 28 8l4-6.5-7.5 0a8 8 0 0 1-12 4.5z" fill="#d83a20"/><circle cx="33.4" cy="23.8" r="8.2" fill="none" stroke="#00aaf5" stroke-width="1.7" stroke-dasharray="42 10"/><circle cx="33.6" cy="23" r="4.5" fill="#e87040"/><g transform="translate(0,36)"><rect x="0.5" y="0.5" width="12" height="12" fill="#fdfdfd" stroke="#dcd4d4" stroke-width="1"/><path d="M4.3 2.6h6.2v6.2L8.7 7.1C7 8 6.2 9.6 5.9 11.8 4.7 11 4 9.6 4.2 8 4.4 6.6 5.3 5.4 6.7 4.9z" fill="#2d5ea8"/><path d="M6.7 4.9L4.3 2.6h6.2z" fill="#3a70b8"/></g></svg><div class="dl" style="left:214px;top:430px;width:92px">Xshell</div><svg style="left:8px;top:478px" width="48" height="48" viewBox="0 0 48 48"><path d="M8 6l12-0.5 1 2.5 11 0v35l-23 0z" fill="#f5d27a"/><path d="M8 6h10l2 2h12v2H8z" fill="#e9bf55"/><path d="M17 11h13l4 4v27H17z" fill="#f4f4f4" stroke="#d8d8d8" stroke-width=".6"/><path d="M21 13h13l4 4v27H21z" fill="#fafafa" stroke="#d5d5d5" stroke-width=".6"/><rect x="27" y="28" width="6" height="4" fill="#bbb"/><g stroke="#ddd" stroke-width=".7"><path d="M24 18h10M24 21h10M24 24h10"/></g><path d="M8 6l8 3v38l-8-3z" fill="#fbe29a"/><path d="M8 6l1 0v38l-1 0z" fill="#e8c060"/></svg><div class="dl" style="left:-14px;top:531px;width:92px">git</div><svg style="left:84px;top:478px" width="48" height="48" viewBox="0 0 48 48"><defs><clipPath id="edc"><rect x="0" y="0.5" width="48" height="47.5" rx="9"/></clipPath></defs><g clip-path="url(#edc)"><rect x="0" y="0" width="48" height="48" fill="#2a7ef2"/><path d="M0 0h48v8L8 48H0z" fill="#5aa6fb"/><path d="M40 0h8v2L2 48H0v-6z" fill="#4a9af8" opacity=".6"/></g><path d="M14.5 13H24a11.85 11.85 0 0 1 0 23.7H14.5" fill="none" stroke="#fff" stroke-width="5" stroke-linecap="round"/><rect x="12.5" y="22.6" width="13.2" height="4.4" rx="2.2" fill="#a8dcf8"/><g transform="translate(0,36)"><rect x="0.5" y="0.5" width="12" height="12" fill="#fdfdfd" stroke="#dcd4d4" stroke-width="1"/><path d="M4.3 2.6h6.2v6.2L8.7 7.1C7 8 6.2 9.6 5.9 11.8 4.7 11 4 9.6 4.2 8 4.4 6.6 5.3 5.4 6.7 4.9z" fill="#2d5ea8"/><path d="M6.7 4.9L4.3 2.6h6.2z" fill="#3a70b8"/></g></svg><div class="dl" style="left:62px;top:531px;width:92px">EdrawMax...</div><svg style="left:160px;top:478px" width="48" height="48" viewBox="0 0 48 48"><rect x="0.9" y="1.7" width="45.8" height="45.7" rx="4.5" fill="#f5cf14"/><circle cx="24" cy="19.3" r="11" fill="#fff"/><path d="M20.5 13.3l9 6-9 6z" fill="#f5cf14"/><text x="26" y="42" text-anchor="middle" font-family="Liberation Sans" font-weight="bold" font-size="11" fill="#2a1a10">Player</text><g transform="translate(0,36)"><rect x="0.5" y="0.5" width="12" height="12" fill="#fdfdfd" stroke="#dcd4d4" stroke-width="1"/><path d="M4.3 2.6h6.2v6.2L8.7 7.1C7 8 6.2 9.6 5.9 11.8 4.7 11 4 9.6 4.2 8 4.4 6.6 5.3 5.4 6.7 4.9z" fill="#2d5ea8"/><path d="M6.7 4.9L4.3 2.6h6.2z" fill="#3a70b8"/></g></svg><div class="dl" style="left:138px;top:531px;width:92px">PotPlayer</div><svg style="left:236px;top:478px" width="48" height="48" viewBox="0 0 48 48"><rect x="0.2" y="1.1" width="47.5" height="47.5" rx="11" fill="#000"/><g fill="none" stroke="#fff" stroke-width="4.6" stroke-linejoin="round"><path d="M33 17.2H10.8l29.8 18.6"/><path d="M33 34.5H10.8l29.8-19.2"/></g><g transform="translate(0,36)"><rect x="0.5" y="0.5" width="12" height="12" fill="#fdfdfd" stroke="#dcd4d4" stroke-width="1"/><path d="M4.3 2.6h6.2v6.2L8.7 7.1C7 8 6.2 9.6 5.9 11.8 4.7 11 4 9.6 4.2 8 4.4 6.6 5.3 5.4 6.7 4.9z" fill="#2d5ea8"/><path d="M6.7 4.9L4.3 2.6h6.2z" fill="#3a70b8"/></g></svg><div class="dl" style="left:214px;top:531px;width:92px">剪映专业版</div><svg style="left:8px;top:579px" width="48" height="48" viewBox="0 0 48 48"><path d="M8 5.8h24.7V40H8z" fill="#f1c77a"/><path d="M22 7l10.7 0 2.3 23.5v9.5H26z" fill="#f6d68a"/><path d="M8 7.4l8 5.6v32.6l-8-5.6z" fill="#fce59e"/><path d="M16 13h10l9 17.5V40H16z" fill="#f3ca78"/><path d="M8 7.4v32.6l8 5.6V13z" fill="#fbe6a2"/></svg><div class="dl" style="left:-14px;top:632px;width:92px">music</div><svg style="left:84px;top:579px" width="48" height="48" viewBox="0 0 48 48"><path d="M7 40l12.7-11" stroke="#a84410" stroke-width="6.5" stroke-linecap="round"/><path d="M7 40l12.7-11" stroke="#ee9418" stroke-width="4" stroke-linecap="round"/><circle cx="28.4" cy="21" r="13.8" fill="none" stroke="#a84410" stroke-width="9.2"/><circle cx="28.4" cy="21" r="13.8" fill="none" stroke="#ee9418" stroke-width="7"/><g transform="translate(0,36)"><rect x="0.5" y="0.5" width="12" height="12" fill="#fdfdfd" stroke="#dcd4d4" stroke-width="1"/><path d="M4.3 2.6h6.2v6.2L8.7 7.1C7 8 6.2 9.6 5.9 11.8 4.7 11 4 9.6 4.2 8 4.4 6.6 5.3 5.4 6.7 4.9z" fill="#2d5ea8"/><path d="M6.7 4.9L4.3 2.6h6.2z" fill="#3a70b8"/></g></svg><div class="dl" style="left:62px;top:632px;width:92px">everything</div><svg style="left:160px;top:579px" width="48" height="48" viewBox="0 0 48 48"><rect x="2" y="1.8" width="44" height="42.2" rx="7" fill="#001e36"/><text x="24.3" y="31.3" text-anchor="middle" font-family="Liberation Sans" font-weight="bold" font-size="26" fill="#31a8ff">Ps</text><g transform="translate(0,36)"><rect x="0.5" y="0.5" width="12" height="12" fill="#fdfdfd" stroke="#dcd4d4" stroke-width="1"/><path d="M4.3 2.6h6.2v6.2L8.7 7.1C7 8 6.2 9.6 5.9 11.8 4.7 11 4 9.6 4.2 8 4.4 6.6 5.3 5.4 6.7 4.9z" fill="#2d5ea8"/><path d="M6.7 4.9L4.3 2.6h6.2z" fill="#3a70b8"/></g></svg><div class="dl" style="left:138px;top:632px;width:92px">ps2025</div><svg style="left:236px;top:579px" width="48" height="48" viewBox="0 0 48 48"><defs><clipPath id="yqc"><rect x="0" y="0.8" width="47.8" height="48" rx="10"/></clipPath></defs><rect x="0" y="0.8" width="47.8" height="48" rx="10" fill="#55bb4a"/><g clip-path="url(#yqc)"><path d="M14.4 12.3Q24 11 28.3 13Q33 16 38.6 19.8Q35 22 35.5 27Q38 33 37.5 40Q36 46 33 49H8L3 46Q5 39 10 33Q17 26 17 20Q17 15 14.4 12.3z" fill="#ededed"/><circle cx="21" cy="38.5" r="11.5" fill="none" stroke="#d6e6ee" stroke-width="2.5"/><circle cx="20.5" cy="39" r="9.5" fill="#f4f4f4"/></g><g transform="translate(0,36)"><rect x="0.5" y="0.5" width="12" height="12" fill="#fdfdfd" stroke="#dcd4d4" stroke-width="1"/><path d="M4.3 2.6h6.2v6.2L8.7 7.1C7 8 6.2 9.6 5.9 11.8 4.7 11 4 9.6 4.2 8 4.4 6.6 5.3 5.4 6.7 4.9z" fill="#2d5ea8"/><path d="M6.7 4.9L4.3 2.6h6.2z" fill="#3a70b8"/></g></svg><div class="dl" style="left:214px;top:632px;width:92px">语雀</div><svg style="left:8px;top:680px" width="48" height="48" viewBox="0 0 48 48"><path d="M8 6l12-0.5 1 2.5 11 0v35l-23 0z" fill="#f5d27a"/><path d="M8 6h10l2 2h12v2H8z" fill="#e9bf55"/><path d="M16 11h20v33H16z" fill="#fafafa" stroke="#ddd" stroke-width=".5"/><rect x="24" y="27" width="2.5" height="2.5" fill="#f25022"/><rect x="27" y="27" width="2.5" height="2.5" fill="#7fba00"/><rect x="24" y="30" width="2.5" height="2.5" fill="#00a4ef"/><rect x="27" y="30" width="2.5" height="2.5" fill="#ffb900"/><path d="M8 6l8 3v38l-8-3z" fill="#fbe29a"/><path d="M8 6l1 0v38l-1 0z" fill="#e8c060"/></svg><div class="dl" style="left:-14px;top:733px;width:92px">win10激活系<br>统工具</div><svg style="left:84px;top:680px" width="48" height="48" viewBox="0 0 48 48"><rect x="1" y="1" width="44" height="44" fill="#f5cc10"/><rect x="3.5" y="3.5" width="39" height="39" fill="#282a22"/><text x="23.5" y="31.5" text-anchor="middle" font-family="Liberation Sans" font-weight="bold" font-size="22" fill="#f5cc10">Fw</text><g transform="translate(0,36)"><rect x="0.5" y="0.5" width="12" height="12" fill="#fdfdfd" stroke="#dcd4d4" stroke-width="1"/><path d="M4.3 2.6h6.2v6.2L8.7 7.1C7 8 6.2 9.6 5.9 11.8 4.7 11 4 9.6 4.2 8 4.4 6.6 5.3 5.4 6.7 4.9z" fill="#2d5ea8"/><path d="M6.7 4.9L4.3 2.6h6.2z" fill="#3a70b8"/></g></svg><div class="dl" style="left:62px;top:733px;width:92px">fireworks</div><svg style="left:160px;top:680px" width="48" height="48" viewBox="0 0 48 48"><rect x="5.5" y="13.3" width="35.5" height="22.5" fill="#fff"/><rect x="7" y="14.8" width="32.5" height="19.5" fill="#f0a050"/><rect x="7" y="20" width="32.5" height="6" fill="#f8dc9a"/><path d="M7 27h32.5v7H7z" fill="#e84a28"/><path d="M7 28q12-2 32.5 1v3H7z" fill="#f08a50"/><path d="M7 18q4-1 6 2t-1 6-5 1z" fill="#201008"/><g fill="#4ab848" stroke="#2a6a30" stroke-width=".7"><path d="M4 7.5l3.5-3.5 8 8 3.5-3.5v11.5H7.5l3.5-3.5z"/><path d="M44 7.5l-3.5-3.5-8 8-3.5-3.5v11.5h11.5l-3.5-3.5z"/><path d="M4 41.5l3.5 3.5 8-8 3.5 3.5V29H7.5l3.5 3.5z"/><path d="M44 41.5l-3.5 3.5-8-8-3.5 3.5V29h11.5l-3.5 3.5z"/></g><g transform="translate(0,36)"><rect x="0.5" y="0.5" width="12" height="12" fill="#fdfdfd" stroke="#dcd4d4" stroke-width="1"/><path d="M4.3 2.6h6.2v6.2L8.7 7.1C7 8 6.2 9.6 5.9 11.8 4.7 11 4 9.6 4.2 8 4.4 6.6 5.3 5.4 6.7 4.9z" fill="#2d5ea8"/><path d="M6.7 4.9L4.3 2.6h6.2z" fill="#3a70b8"/></g></svg><div class="dl" style="left:138px;top:733px;width:92px">Resize.exe</div><svg style="left:8px;top:781px" width="48" height="48" viewBox="0 0 48 48"><rect x="1" y="1" width="46" height="44" fill="#2bb8f0"/><rect x="3.5" y="3.5" width="41" height="39" fill="#061a26"/><text x="23.5" y="33" text-anchor="middle" font-family="Liberation Sans" font-size="28" fill="#31c5f4" stroke="#31c5f4" stroke-width=".6">Ps</text><g transform="translate(0,36)"><rect x="0.5" y="0.5" width="12" height="12" fill="#fdfdfd" stroke="#dcd4d4" stroke-width="1"/><path d="M4.3 2.6h6.2v6.2L8.7 7.1C7 8 6.2 9.6 5.9 11.8 4.7 11 4 9.6 4.2 8 4.4 6.6 5.3 5.4 6.7 4.9z" fill="#2d5ea8"/><path d="M6.7 4.9L4.3 2.6h6.2z" fill="#3a70b8"/></g></svg><div class="dl" style="left:-14px;top:834px;width:92px">Adobe<br>Photosh...</div><svg style="left:84px;top:781px" width="48" height="48" viewBox="0 0 48 48"><path d="M4 24q0-18 20-18q20 0 20 22q0 16-20 16q-20 0-20-20z" fill="#d8dce0"/><path d="M6 26q0-14 18-14q16 0 18 14q-2 14-18 14q-18 0-18-14z" fill="#eceef0"/><circle cx="16" cy="25" r="8" fill="#1a4a8a"/><circle cx="16" cy="25" r="4" fill="#0a2a5a"/><circle cx="27" cy="27" r="8" fill="#f0f0f0" stroke="#bbb" stroke-width=".6"/><circle cx="27" cy="27" r="1.5" fill="#aaa"/><path d="M20 4h16v10H20z" fill="#7a7070"/><path d="M22 5h5v8h-5zM29 5h6v8h-6z" fill="#d0d0d0"/><path d="M30 14v14M38 13v14" stroke="#8a9aaa" stroke-width="2"/><path d="M30 14l8-1v3l-8 1z" fill="#8a9aaa"/><g transform="translate(0,36)"><rect x="0.5" y="0.5" width="12" height="12" fill="#fdfdfd" stroke="#dcd4d4" stroke-width="1"/><path d="M4.3 2.6h6.2v6.2L8.7 7.1C7 8 6.2 9.6 5.9 11.8 4.7 11 4 9.6 4.2 8 4.4 6.6 5.3 5.4 6.7 4.9z" fill="#2d5ea8"/><path d="M6.7 4.9L4.3 2.6h6.2z" fill="#3a70b8"/></g></svg><div class="dl" style="left:62px;top:834px;width:92px">FormatFac...</div><svg style="left:160px;top:781px" width="48" height="48" viewBox="0 0 48 48"><rect x="6" y="0" width="16" height="17.6" fill="#4aa0f8"/><rect x="25" y="0" width="16" height="17.6" fill="#f5cf14"/><path d="M6 21h16v10l-16 17z" fill="#e34a30"/><path d="M25 21h16v26.8l-16-16.5z" fill="#55b848"/><g transform="translate(0,36)"><rect x="0.5" y="0.5" width="12" height="12" fill="#fdfdfd" stroke="#dcd4d4" stroke-width="1"/><path d="M4.3 2.6h6.2v6.2L8.7 7.1C7 8 6.2 9.6 5.9 11.8 4.7 11 4 9.6 4.2 8 4.4 6.6 5.3 5.4 6.7 4.9z" fill="#2d5ea8"/><path d="M6.7 4.9L4.3 2.6h6.2z" fill="#3a70b8"/></g></svg><div class="dl" style="left:138px;top:834px;width:92px">Snipaste</div><svg style="left:8px;top:882px" width="48" height="48" viewBox="0 0 48 48"><rect x="0" y="1" width="46" height="45" rx="7" fill="#fafafa" stroke="#e8e8e8" stroke-width=".5"/><path d="M10 8h5l10 14-10 14h-5l10-14z" fill="#2a88d0"/><path d="M10 8h5l5 7-2.5 3z" fill="#4a9ad8" opacity=".8"/><path d="M30 10l5-3 4 2-6 9z" fill="#3ab848"/><path d="M28 29l3-3 8 11-3 2z" fill="#e8402a"/><g transform="translate(0,36)"><rect x="0.5" y="0.5" width="12" height="12" fill="#fdfdfd" stroke="#dcd4d4" stroke-width="1"/><path d="M4.3 2.6h6.2v6.2L8.7 7.1C7 8 6.2 9.6 5.9 11.8 4.7 11 4 9.6 4.2 8 4.4 6.6 5.3 5.4 6.7 4.9z" fill="#2d5ea8"/><path d="M6.7 4.9L4.3 2.6h6.2z" fill="#3a70b8"/></g></svg><div class="dl" style="left:-14px;top:935px;width:92px">AxureRP9</div><svg style="left:84px;top:882px" width="48" height="48" viewBox="0 0 48 48"><rect x="1" y="5" width="44" height="42" rx="6" fill="#f0f0f0" stroke="#d8d8d8" stroke-width=".6"/><path d="M44 30q-8 10-20 14l22-4z" fill="#c8c8c8" opacity=".5"/><path d="M25 -1q-18 6-25 32l12 3q0-26 13-35z" fill="#3a7a3a"/><path d="M25 -1q-12 6-18 22l8 2q2-14 10-24z" fill="#4ab848"/><path d="M10 6q22 6 30 32l-22 10q4-26-8-42z" fill="#d82a1a"/><path d="M10 6q14 2 22 16l-12 8q0-16-10-24z" fill="#e84a30"/><g transform="translate(0,36)"><rect x="0.5" y="0.5" width="12" height="12" fill="#fdfdfd" stroke="#dcd4d4" stroke-width="1"/><path d="M4.3 2.6h6.2v6.2L8.7 7.1C7 8 6.2 9.6 5.9 11.8 4.7 11 4 9.6 4.2 8 4.4 6.6 5.3 5.4 6.7 4.9z" fill="#2d5ea8"/><path d="M6.7 4.9L4.3 2.6h6.2z" fill="#3a70b8"/></g></svg><div class="dl" style="left:62px;top:935px;width:92px">FSCapture</div><svg style="left:160px;top:882px" width="48" height="48" viewBox="0 0 48 48"><path d="M2 6q0-5 5-5h34q5 0 5 5v33q0 5-5 5H8q-3 0-4-2q-2-6-2-12z" fill="#fff"/><g stroke="#e8ecef" stroke-width=".8"><path d="M8 14h32M8 19h32M8 24h32M8 29h32M8 34h32"/></g><path d="M13 9h22v7h-1.5q-1-4-4-4h-3v22l3 1v1h-13v-1l3-1V12h-3q-3 0-4 4H13z" fill="#222"/><g transform="translate(0,36)"><rect x="0.5" y="0.5" width="12" height="12" fill="#fdfdfd" stroke="#dcd4d4" stroke-width="1"/><path d="M4.3 2.6h6.2v6.2L8.7 7.1C7 8 6.2 9.6 5.9 11.8 4.7 11 4 9.6 4.2 8 4.4 6.6 5.3 5.4 6.7 4.9z" fill="#2d5ea8"/><path d="M6.7 4.9L4.3 2.6h6.2z" fill="#3a70b8"/></g></svg><div class="dl" style="left:138px;top:935px;width:92px">Typora.exe</div>
<div class="a" style="left:448px;top:226px;width:1134px;height:638px;background:#fff;border:1px solid #2f6fa8;box-shadow:0 3px 10px rgba(0,10,50,.28)"></div><svg style="left:459px;top:233px" width="14" height="17" viewBox="0 0 14 17"><rect x="0.5" y="0.5" width="11" height="15" fill="#fde08e" stroke="#f0c070"/><rect x="0.5" y="0.5" width="4" height="1.5" fill="#f5cf2a"/><rect x="10.5" y="9.5" width="2.5" height="6" fill="#fde08e" stroke="#f0c070"/></svg><div class="a" style="left:480px;top:235px;width:1px;height:12px;background:#8a8a94"></div><svg style="left:492px;top:233px" width="13" height="17" viewBox="0 0 13 17"><path d="M0.5 0.5h9l3 3v13h-12z" fill="#fff" stroke="#6f6f78"/><path d="M2.5 9.5l2.5 2.5 5-5" fill="none" stroke="#e8542a" stroke-width="1.6"/></svg><svg style="left:514px;top:233px" width="14" height="17" viewBox="0 0 14 17"><rect x="0.5" y="0.5" width="11" height="15" fill="#fde08e" stroke="#f0c070"/><rect x="10.5" y="9.5" width="2.5" height="6" fill="#fde08e" stroke="#f0c070"/></svg><svg style="left:535px;top:238px" width="8" height="7" viewBox="0 0 8 7"><rect x="0" y="0" width="8" height="1.2" fill="#111"/><path d="M0.5 3h7l-3.5 3.5z" fill="#111"/></svg><div class="a" style="left:549px;top:235px;width:1px;height:12px;background:#8a8a94"></div><div class="t " style="left:558px;top:233.0px;font-size:12px;color:#888;letter-spacing:.55px">E:\desktop\win10激活系统工具</div><div class="a" style="left:1461px;top:241px;width:11px;height:1px;background:#777"></div><div class="a" style="left:1507px;top:236px;width:10px;height:10px;border:1px solid #777"></div><svg style="left:1552px;top:236px" width="11" height="11" viewBox="0 0 11 11"><path d="M0.5 0.5l10 10M10.5 0.5l-10 10" stroke="#777" stroke-width="1"/></svg><div class="a" style="left:449px;top:257px;width:56px;height:23px;background:#1a64b8"></div><div class="t " style="left:377px;width:200px;text-align:center;top:261.0px;font-size:12px;color:#fff;">文件</div><div class="a" style="left:505px;top:257px;width:52px;height:27px;background:#f4f6f5;border:1px solid #dadbdc;border-bottom:none"></div><div class="t " style="left:431px;width:200px;text-align:center;top:262.0px;font-size:12px;color:#222;">主页</div><div class="t " style="left:484px;width:200px;text-align:center;top:262.0px;font-size:12px;color:#222;">共享</div><div class="t " style="left:537px;width:200px;text-align:center;top:262.0px;font-size:12px;color:#222;">查看</div><svg style="left:1543px;top:266px" width="10" height="6" viewBox="0 0 10 6"><path d="M0.5 5.5l4.5-4.5 4.5 4.5" fill="none" stroke="#999" stroke-width="1.2"/></svg><div class="a" style="left:1562px;top:262px;width:16px;height:16px;border-radius:50%;background:#1f6fc5"></div><div class="t" style="left:1562px;width:16px;text-align:center;top:262px;font-size:12px;font-weight:bold;color:#fff">?</div><div class="a" style="left:449px;top:283px;width:1132px;height:109px;background:#f4f6f5;border-top:1px solid #dadbdc;border-bottom:1px solid #dadbdc"></div><div class="a" style="left:505px;top:283px;width:51px;height:2px;background:#f4f6f5"></div><div class="a" style="left:704px;top:290px;width:1px;height:96px;background:#e2e3e4"></div><div class="a" style="left:891px;top:290px;width:1px;height:96px;background:#e2e3e4"></div><div class="a" style="left:1028px;top:290px;width:1px;height:96px;background:#e2e3e4"></div><div class="a" style="left:1155px;top:290px;width:1px;height:96px;background:#e2e3e4"></div><div class="a" style="left:1240px;top:290px;width:1px;height:96px;background:#e2e3e4"></div><div class="a" style="left:797px;top:300px;width:1px;height:53px;background:#e2e3e4"></div><svg style="left:470px;top:296px" width="22" height="22" viewBox="0 0 22 22"><path d="M13 1l8 8-3 1-4 4 0 4-2 1-3-3-6 6-1-1 6-6-3-3 1-2 4 0 4-4z" fill="#808088"/></svg><div class="t " style="left:381px;width:200px;text-align:center;top:326.0px;font-size:12px;color:#262626;">固定到快</div><div class="t " style="left:381px;width:200px;text-align:center;top:344.0px;font-size:12px;color:#262626;">速访问</div><svg style="left:516px;top:292px" width="26" height="30" viewBox="0 0 26 30"><path d="M0.5 0.5h10l3 3v18h-13z" fill="#f4f6f9" stroke="#c5cbd4"/><path d="M8.5 8.5h10l4 4v17h-14z" fill="#f4f6f9" stroke="#b9c0ca"/><g stroke="#c9d2de"><path d="M11 14h9M11 16.5h9M11 19h9M11 21.5h9M11 24h9M11 26.5h9"/></g></svg><div class="t " style="left:427px;width:200px;text-align:center;top:326.0px;font-size:12px;color:#8b8b8b;">复制</div><svg style="left:560px;top:292px" width="22" height="30" viewBox="0 0 22 30"><rect x="1" y="4" width="19" height="24" rx="1.5" fill="#8ea4bf"/><rect x="3" y="6" width="15" height="20" fill="#eef3fa"/><g stroke="#c6d3e4"><path d="M5 10h11M5 13h11M5 16h11M5 19h11M5 22h11"/></g><rect x="6" y="2" width="9" height="4" rx="1" fill="#b5c3d6"/><circle cx="10.5" cy="2" r="1.6" fill="#b5c3d6"/></svg><div class="t " style="left:470px;width:200px;text-align:center;top:326.0px;font-size:12px;color:#8b8b8b;">粘贴</div><svg style="left:555px;top:347px" width="11" height="15" viewBox="0 0 11 15"><path d="M1 0l6 10M10 0l-6 10" stroke="#9aa4b2" stroke-width="1.2"/><circle cx="3" cy="12" r="2.2" fill="none" stroke="#9aa4b2" stroke-width="1.2"/><circle cx="8" cy="12" r="2.2" fill="none" stroke="#9aa4b2" stroke-width="1.2"/></svg><div class="t " style="left:572px;top:346.0px;font-size:12px;color:#8b8b8b;">剪切</div><svg style="left:603px;top:294px" width="16" height="9" viewBox="0 0 16 9"><rect x="0" y="0" width="16" height="9" fill="#dfe4ea"/><text x="1.5" y="7" font-size="6" fill="#6f7f90" font-family="Liberation Sans">\\...</text></svg><div class="t " style="left:622px;top:290.0px;font-size:12px;color:#8b8b8b;">复制路径</div><svg style="left:605px;top:313px" width="12" height="16" viewBox="0 0 12 16"><rect x="0.5" y="2" width="11" height="13.5" fill="#eef3fa" stroke="#8ea4bf" stroke-width="1.4"/><rect x="3" y="0.5" width="6" height="3" fill="#b5c3d6"/><path d="M4 11l4-4M5 7h3v3" stroke="#6f88a8" stroke-width="1.3" fill="none"/></svg><div class="t " style="left:622px;top:312.0px;font-size:12px;color:#8b8b8b;">粘贴快捷方式</div><div class="t " style="left:476px;width:200px;text-align:center;top:371.0px;font-size:12px;color:#3a3a3a;">剪贴板</div><svg style="left:719px;top:292px" width="27" height="30" viewBox="0 0 27 30"><rect x="0" y="0" width="20" height="28" fill="#dbe6ef"/><rect x="1.5" y="1.5" width="17" height="25" fill="#e6eef5"/><path d="M26 21h-12v-5l-8 7 8 7v-5h12z" fill="#a8b0bc"/></svg><div class="t " style="left:629px;width:200px;text-align:center;top:326.0px;font-size:12px;color:#8b8b8b;">移动到</div><svg style="left:726px;top:342px" width="6" height="4" viewBox="0 0 6 4"><path d="M0 0h6l-3 3z" fill="#b0b0b0"/></svg><svg style="left:760px;top:290px" width="27" height="31" viewBox="0 0 27 31"><rect x="0" y="3" width="20" height="28" fill="#dbe6ef"/><rect x="1.5" y="4.5" width="17" height="25" fill="#e6eef5"/><path d="M10.5 0.5h10l4 4v14h-14z" fill="#f4f6f9" stroke="#b9c0ca"/><g stroke="#c9d2de"><path d="M13 7h9M13 9.5h9M13 12h9M13 14.5h9"/></g></svg><div class="t " style="left:671px;width:200px;text-align:center;top:326.0px;font-size:12px;color:#8b8b8b;">复制到</div><svg style="left:768px;top:342px" width="6" height="4" viewBox="0 0 6 4"><path d="M0 0h6l-3 3z" fill="#b0b0b0"/></svg><svg style="left:809px;top:294px" width="26" height="26" viewBox="0 0 26 26"><path d="M2 2l22 22M24 2l-22 22" stroke="#8497ae" stroke-width="3.8"/></svg><div class="t " style="left:721px;width:200px;text-align:center;top:327.0px;font-size:12px;color:#262626;">删除</div><svg style="left:818px;top:343px" width="7" height="4" viewBox="0 0 7 4"><path d="M0 0h7l-3.5 3.5z" fill="#333"/></svg><svg style="left:849px;top:294px" width="30" height="27" viewBox="0 0 30 27"><rect x="0.5" y="7.5" width="28" height="11" fill="#eef1f4" stroke="#b5bcc6"/><rect x="3" y="10" width="14" height="6" fill="#9aa3ae"/><path d="M19 0.5h7M22.5 0.5v25M19 25.5h7" stroke="#9aa3ae" stroke-width="1.8"/></svg><div class="t " style="left:762px;width:200px;text-align:center;top:326.0px;font-size:12px;color:#8b8b8b;">重命名</div><div class="t " style="left:697px;width:200px;text-align:center;top:371.0px;font-size:12px;color:#3a3a3a;">组织</div><svg style="left:904px;top:294px" width="22" height="28" viewBox="0 0 22 28"><path d="M2 1l16 2v22l-16-2z" fill="#f5cf7a"/><path d="M2 1h3l15 3v21h-3z" fill="#fde7a8"/><path d="M2 1l14 3v24l-14-3z" fill="#f6d58a"/></svg><div class="t " style="left:815px;width:200px;text-align:center;top:326.0px;font-size:12px;color:#262626;">新建</div><div class="t " style="left:816px;width:200px;text-align:center;top:344.0px;font-size:12px;color:#262626;">文件夹</div><svg style="left:941px;top:290px" width="17" height="18" viewBox="0 0 17 18"><rect x="0.5" y="0.5" width="9" height="8" fill="#e8eef5" stroke="#3c78c0"/><rect x="4.5" y="4.5" width="8" height="9" fill="#fff" stroke="#777"/><rect x="8.5" y="8.5" width="8" height="9" fill="#e9f2fb" stroke="#777"/><g stroke="#5a96d8"><path d="M10 11h5M10 13h5M10 15h5"/></g></svg><div class="t " style="left:960px;top:290.0px;font-size:12px;color:#262626;">新建项目</div><svg style="left:1012px;top:296px" width="7" height="4" viewBox="0 0 7 4"><path d="M0 0h7l-3.5 3.5z" fill="#333"/></svg><svg style="left:941px;top:312px" width="16" height="17" viewBox="0 0 16 17"><path d="M5.5 0.5h7l3 3v13h-10z" fill="#fff" stroke="#777"/><path d="M0 4h6M1 6.5h5M0 9h6" stroke="#2f78c8" stroke-width="1.2"/></svg><div class="t " style="left:960px;top:312.0px;font-size:12px;color:#262626;">轻松访问</div><svg style="left:1012px;top:318px" width="7" height="4" viewBox="0 0 7 4"><path d="M0 0h7l-3.5 3.5z" fill="#333"/></svg><div class="t " style="left:859px;width:200px;text-align:center;top:371.0px;font-size:12px;color:#3a3a3a;">新建</div><svg style="left:1042px;top:292px" width="23" height="30" viewBox="0 0 23 30"><path d="M0.5 0.5h17l5 5v24h-22z" fill="#fff" stroke="#6f6f78"/><path d="M4 15l5 5 9-9" fill="none" stroke="#e0502a" stroke-width="2.4"/></svg><div class="t " style="left:953px;width:200px;text-align:center;top:327.0px;font-size:12px;color:#262626;">属性</div><svg style="left:1050px;top:344px" width="7" height="4" viewBox="0 0 7 4"><path d="M0 0h7l-3.5 3.5z" fill="#333"/></svg><svg style="left:1080px;top:293px" width="14" height="17" viewBox="0 0 14 17"><rect x="0.5" y="0.5" width="10" height="14" fill="#eef0f3" stroke="#b5bcc6"/><g fill="#a0a8b2"><rect x="2" y="3" width="2" height="2"/><rect x="2" y="7" width="2" height="2"/><rect x="2" y="11" width="2" height="2"/></g><path d="M10 17v-6M7.5 13l2.5-3 2.5 3" stroke="#a0a8b2" stroke-width="1.6" fill="none"/></svg><div class="t " style="left:1097px;top:293.0px;font-size:12px;color:#8b8b8b;">打开</div><svg style="left:1125px;top:299px" width="6" height="4" viewBox="0 0 6 4"><path d="M0 0h6l-3 3z" fill="#b8b8b8"/></svg><svg style="left:1080px;top:318px" width="14" height="17" viewBox="0 0 14 17"><path d="M0.5 0.5h8l3 3v13h-11z" fill="#f1f3f6" stroke="#c0c6ce"/><path d="M3 14l9-10 1.5 1.5-9 10z" fill="#c8ced6"/></svg><div class="t " style="left:1097px;top:319.0px;font-size:12px;color:#8b8b8b;">编辑</div><svg style="left:1078px;top:343px" width="17" height="17" viewBox="0 0 17 17"><rect x="0" y="0" width="11" height="13" fill="#fcd97a"/><circle cx="11" cy="11" r="5.5" fill="#e8e8e8" stroke="#8a8a8a"/><path d="M11 8v3l2 1" stroke="#555" fill="none"/><path d="M3 9l3 3-3 3" stroke="#3aa03a" stroke-width="2" fill="none"/></svg><div class="t " style="left:1097px;top:344.0px;font-size:12px;color:#262626;">历史记录</div><div class="t " style="left:991px;width:200px;text-align:center;top:371.0px;font-size:12px;color:#3a3a3a;">打开</div><svg style="left:1163px;top:291px" width="16" height="16" viewBox="0 0 16 16"><g fill="#bfe0f5" stroke="#3a8fd6"><rect x="0.5" y="0.5" width="6.5" height="6.5"/><rect x="9" y="0.5" width="6.5" height="6.5"/><rect x="0.5" y="9" width="6.5" height="6.5"/><rect x="9" y="9" width="6.5" height="6.5"/></g></svg><div class="t " style="left:1182px;top:290.0px;font-size:12px;color:#262626;">全部选择</div><svg style="left:1163px;top:313px" width="16" height="16" viewBox="0 0 16 16"><g fill="#fff" stroke="#9a9a9a"><rect x="0.5" y="0.5" width="6" height="6"/><rect x="9.5" y="0.5" width="6" height="6"/><rect x="0.5" y="9.5" width="6" height="6"/><rect x="9.5" y="9.5" width="6" height="6"/></g></svg><div class="t " style="left:1182px;top:312.0px;font-size:12px;color:#262626;">全部取消</div><svg style="left:1163px;top:335px" width="16" height="16" viewBox="0 0 16 16"><g fill="#fff" stroke="#9a9a9a"><rect x="0.5" y="0.5" width="6" height="6"/><rect x="9.5" y="9.5" width="6" height="6"/></g><g fill="#bfe0f5" stroke="#3a8fd6"><rect x="9" y="0.5" width="6.5" height="6.5"/><rect x="0.5" y="9" width="6.5" height="6.5"/></g></svg><div class="t " style="left:1182px;top:334.0px;font-size:12px;color:#262626;">反向选择</div><div class="t " style="left:1097px;width:200px;text-align:center;top:371.0px;font-size:12px;color:#3a3a3a;">选择</div><svg style="left:461px;top:403px" width="14" height="12" viewBox="0 0 14 12"><path d="M13.5 6h-12M6 1l-5 5 5 5" fill="none" stroke="#c2c2c2" stroke-width="1.3"/></svg><svg style="left:491px;top:403px" width="14" height="12" viewBox="0 0 14 12"><path d="M0.5 6h12M8 1l5 5-5 5" fill="none" stroke="#c2c2c2" stroke-width="1.3"/></svg><svg style="left:517px;top:406px" width="8" height="5" viewBox="0 0 8 5"><path d="M0.5 0.5l3.5 3.5 3.5-3.5" fill="none" stroke="#c8c8c8" stroke-width="1"/></svg><svg style="left:536px;top:402px" width="12" height="14" viewBox="0 0 12 14"><path d="M6 13.5v-12M0.8 6.5l5.2-5.5 5.2 5.5" fill="none" stroke="#5a5a5a" stroke-width="1.6"/></svg><div class="a" style="left:555px;top:397px;width:801px;height:23px;border:1px solid #d9d9d9;background:#fff"></div><div class="a" style="left:1334px;top:398px;width:1px;height:21px;background:#e3e3e3"></div><svg style="left:560px;top:400px" width="14" height="17" viewBox="0 0 14 17"><rect x="0.5" y="0.5" width="11" height="15" fill="#fde08e" stroke="#f0c070"/><rect x="0.5" y="0.5" width="4" height="1.5" fill="#f5cf2a"/><rect x="10.5" y="9.5" width="2.5" height="6" fill="#fde08e" stroke="#f0c070"/></svg><svg style="left:582px;top:405px" width="5" height="8" viewBox="0 0 5 8"><path d="M0.8 0.8l3 3.2-3 3.2" fill="none" stroke="#666" stroke-width="1.3"/></svg><div class="t " style="left:597px;top:400.0px;font-size:12px;color:#1a1a1a;">win10激活系统工具</div><svg style="left:1320px;top:405px" width="10" height="6" viewBox="0 0 10 6"><path d="M0.8 0.8l4.2 4.2 4.2-4.2" fill="none" stroke="#555" stroke-width="1.5"/></svg><svg style="left:1339px;top:401px" width="12" height="14" viewBox="0 0 12 14"><path d="M9.5 5.5a4.5 4.5 0 1 1 -3.5 -2.5" fill="none" stroke="#555" stroke-width="1.4"/><path d="M5 0.5l2.5 2.5-2.5 2.5" fill="none" stroke="#555" stroke-width="1.4"/></svg><div class="a" style="left:1367px;top:397px;width:202px;height:23px;border:1px solid #d9d9d9;background:#fff"></div><div class="t " style="left:1377px;top:400.0px;font-size:12px;color:#6d6d6d;letter-spacing:.2px">在 win10激活系统工具 中搜索</div><svg style="left:1548px;top:402px" width="12" height="12" viewBox="0 0 12 12"><circle cx="7" cy="5" r="3.8" fill="none" stroke="#444" stroke-width="1.3"/><path d="M4.4 7.6l-3.6 3.6" stroke="#444" stroke-width="1.6"/></svg><div class="a" style="left:449px;top:443px;width:214px;height:24px;background:#d9d9d9"></div><svg style="left:475px;top:447px" width="15" height="15" viewBox="0 0 15 15"><path d="M8 1l2 4.5 4.8.5-3.6 3.2 1 4.8-4.2-2.5-4.2 2.5 1-4.8-3.6-3.2 4.8-.5z" fill="#3a9be8"/><path d="M0 9h3M1 11h3M0.5 13h3" stroke="#8cc8f0" stroke-width="0.8"/></svg><div class="t " style="left:494px;top:447.0px;font-size:12px;color:#111;">快速访问</div><div class="a" style="left:520px;top:843px;width:1px;height:17px;background:#f0f0f0"></div><svg style="left:481px;top:471px" width="16" height="14" viewBox="0 0 16 14"><rect x="0" y="1" width="16" height="12" fill="#1e86e0"/><rect x="1" y="2" width="14" height="9" fill="#3aa0f0"/><path d="M1 12h14" stroke="#0d4f9a" stroke-dasharray="1 1"/></svg><div class="t " style="left:502px;top:471.0px;font-size:12px;color:#111;">桌面</div><svg style="left:650px;top:473px" width="10" height="10" viewBox="0 0 10 10"><path d="M6 0l4 4-1.5.5-2 2v2l-1 .5-1.5-1.5-3 3-.5-.5 3-3-1.5-1.5.5-1h2l2-2z" fill="#777"/></svg><svg style="left:483px;top:494px" width="13" height="17" viewBox="0 0 13 17"><path d="M0.5 0.5h9l3 3v13h-12z" fill="#fff" stroke="#8a8a92"/><path d="M3 5.5l1.5-3M6 3.5h4M2 7h8.5" stroke="#2f8ad8" stroke-width="1.1"/><path d="M2 9.3h2.5M2 11.3h2.5M2 13.5h8.5" stroke="#9a9aa2" stroke-width=".9"/><path d="M6 9.3h4.5" stroke="#3a9ae0" stroke-width=".9"/><path d="M6 11.3h4.5" stroke="#3a8a4a" stroke-width="1.1"/></svg><div class="t " style="left:502px;top:495.0px;font-size:12px;color:#111;">文档</div><svg style="left:650px;top:497px" width="10" height="10" viewBox="0 0 10 10"><path d="M6 0l4 4-1.5.5-2 2v2l-1 .5-1.5-1.5-3 3-.5-.5 3-3-1.5-1.5.5-1h2l2-2z" fill="#777"/></svg><svg style="left:481px;top:518.5px" width="16" height="17" viewBox="0 0 16 17"><path d="M5 0h6v8.5h5l-8 7.8-8-7.8h5z" fill="#3a8ee0"/></svg><div class="t " style="left:502px;top:519.0px;font-size:12px;color:#111;">下载</div><svg style="left:650px;top:521px" width="10" height="10" viewBox="0 0 10 10"><path d="M6 0l4 4-1.5.5-2 2v2l-1 .5-1.5-1.5-3 3-.5-.5 3-3-1.5-1.5.5-1h2l2-2z" fill="#777"/></svg><svg style="left:481px;top:544px" width="16" height="12" viewBox="0 0 16 12"><rect x="0.5" y="0.5" width="15" height="11" fill="#fff" stroke="#7a7a7a"/><rect x="2" y="2" width="12" height="8" fill="#9fc6e8"/><path d="M2 10l4-4 3 2 2-1 3 3z" fill="#4a8a5a"/></svg><div class="t " style="left:502px;top:543.0px;font-size:12px;color:#111;">图片</div><svg style="left:650px;top:545px" width="10" height="10" viewBox="0 0 10 10"><path d="M6 0l4 4-1.5.5-2 2v2l-1 .5-1.5-1.5-3 3-.5-.5 3-3-1.5-1.5.5-1h2l2-2z" fill="#777"/></svg><svg style="left:483px;top:566px" width="14" height="17" viewBox="0 0 14 17"><rect x="0.5" y="0.5" width="11" height="15" fill="#fde08e" stroke="#f0c070"/><rect x="10.5" y="9.5" width="2.5" height="6" fill="#fde08e" stroke="#f0c070"/></svg><div class="t " style="left:502px;top:567.0px;font-size:12px;color:#111;letter-spacing:.5px">axios</div><svg style="left:483px;top:590px" width="14" height="17" viewBox="0 0 14 17"><rect x="0.5" y="0.5" width="11" height="15" fill="#fde08e" stroke="#f0c070"/><rect x="10.5" y="9.5" width="2.5" height="6" fill="#fde08e" stroke="#f0c070"/></svg><div class="t " style="left:502px;top:591.0px;font-size:12px;color:#111;letter-spacing:.5px">bandicam</div><svg style="left:483px;top:614px" width="14" height="17" viewBox="0 0 14 17"><rect x="0.5" y="0.5" width="11" height="15" fill="#fde08e" stroke="#f0c070"/><rect x="10.5" y="9.5" width="2.5" height="6" fill="#fde08e" stroke="#f0c070"/></svg><div class="t " style="left:502px;top:615.0px;font-size:12px;color:#111;letter-spacing:.5px">ripro-v5</div><svg style="left:483px;top:638px" width="14" height="17" viewBox="0 0 14 17"><rect x="0.5" y="0.5" width="11" height="15" fill="#fde08e" stroke="#f0c070"/><rect x="10.5" y="9.5" width="2.5" height="6" fill="#fde08e" stroke="#f0c070"/></svg><div class="t " style="left:502px;top:639.0px;font-size:12px;color:#111;">授权</div><svg style="left:473px;top:672px" width="16" height="12" viewBox="0 0 16 12"><path d="M4 11.5h9a3 3 0 0 0 0-6 4.5 4.5 0 0 0-8.5-1 3.5 3.5 0 0 0-.5 7z" fill="#1a8ad8"/><path d="M4 11.5h9a3 3 0 0 0 2-1H3z" fill="#0f6ab8"/></svg><div class="t " style="left:494px;top:671.0px;font-size:12px;color:#111;letter-spacing:.3px">WPS云盘</div><svg style="left:473px;top:702px" width="17" height="15" viewBox="0 0 17 15"><rect x="0.5" y="0.5" width="16" height="11" fill="#46a8f0" stroke="#1c7ad0"/><rect x="6" y="12" width="5" height="1.5" fill="#888"/><rect x="3" y="13.5" width="11" height="1.5" fill="#aaa"/></svg><div class="t " style="left:494px;top:703.0px;font-size:12px;color:#111;">此电脑</div><svg style="left:481px;top:726px" width="16" height="16" viewBox="0 0 16 16"><path d="M8 0.5l7 3.5v8l-7 3.5-7-3.5v-8z" fill="#5fb8f0"/><path d="M8 7.5l7-3.5v8l-7 3.5z" fill="#1a78c8"/><path d="M8 7.5v8l-7-3.5v-8z" fill="#3a9ae0"/></svg><div class="t " style="left:502px;top:727.0px;font-size:12px;color:#111;letter-spacing:.3px">3D 对象</div><svg style="left:482px;top:750px" width="14" height="16" viewBox="0 0 14 16"><rect x="0" y="0" width="14" height="16" fill="#333"/><rect x="3" y="1" width="8" height="6" fill="#e0a060"/><rect x="3" y="9" width="8" height="6" fill="#6a8ab0"/><g fill="#fff"><rect x="0.8" y="1" width="1.4" height="1.4"/><rect x="0.8" y="4" width="1.4" height="1.4"/><rect x="0.8" y="7" width="1.4" height="1.4"/><rect x="0.8" y="10" width="1.4" height="1.4"/><rect x="0.8" y="13" width="1.4" height="1.4"/><rect x="11.8" y="1" width="1.4" height="1.4"/><rect x="11.8" y="4" width="1.4" height="1.4"/><rect x="11.8" y="7" width="1.4" height="1.4"/><rect x="11.8" y="10" width="1.4" height="1.4"/><rect x="11.8" y="13" width="1.4" height="1.4"/></g></svg><div class="t " style="left:502px;top:751.0px;font-size:12px;color:#111;letter-spacing:.3px">视频</div><svg style="left:481px;top:776px" width="16" height="12" viewBox="0 0 16 12"><rect x="0.5" y="0.5" width="15" height="11" fill="#fff" stroke="#7a7a7a"/><rect x="2" y="2" width="12" height="8" fill="#9fc6e8"/><path d="M2 10l4-4 3 2 2-1 3 3z" fill="#4a8a5a"/></svg><div class="t " style="left:502px;top:775.0px;font-size:12px;color:#111;letter-spacing:.3px">图片</div><svg style="left:483px;top:798px" width="13" height="17" viewBox="0 0 13 17"><path d="M0.5 0.5h9l3 3v13h-12z" fill="#fff" stroke="#8a8a92"/><path d="M3 5.5l1.5-3M6 3.5h4M2 7h8.5" stroke="#2f8ad8" stroke-width="1.1"/><path d="M2 9.3h2.5M2 11.3h2.5M2 13.5h8.5" stroke="#9a9aa2" stroke-width=".9"/><path d="M6 9.3h4.5" stroke="#3a9ae0" stroke-width=".9"/><path d="M6 11.3h4.5" stroke="#3a8a4a" stroke-width="1.1"/></svg><div class="t " style="left:502px;top:799.0px;font-size:12px;color:#111;letter-spacing:.3px">文档</div><svg style="left:481px;top:822.5px" width="16" height="17" viewBox="0 0 16 17"><path d="M5 0h6v8.5h5l-8 7.8-8-7.8h5z" fill="#3a8ee0"/></svg><div class="t " style="left:502px;top:823.0px;font-size:12px;color:#111;letter-spacing:.3px">下载</div><div class="a" style="left:663px;top:427px;width:17px;height:413px;background:#f0f0f0"></div><div class="a" style="left:665px;top:444px;width:13px;height:271px;background:#cdcdcd"></div><svg style="left:667px;top:432px" width="9" height="6" viewBox="0 0 9 6"><path d="M0.8 5l3.7-3.7 3.7 3.7" fill="none" stroke="#555" stroke-width="1.5"/></svg><svg style="left:667px;top:828px" width="9" height="6" viewBox="0 0 9 6"><path d="M0.8 1l3.7 3.7 3.7-3.7" fill="none" stroke="#555" stroke-width="1.5"/></svg><div class="t " style="left:701px;top:433.0px;font-size:12px;color:#4c607a;">名称</div><svg style="left:821px;top:426px" width="9" height="5" viewBox="0 0 9 5"><path d="M0.5 4.5l4-4 4 4" fill="none" stroke="#555" stroke-width="1.1"/></svg><div class="a" style="left:955px;top:426px;width:1px;height:27px;background:#e5e5e5"></div><div class="a" style="left:1099px;top:426px;width:1px;height:27px;background:#e5e5e5"></div><div class="a" style="left:1219px;top:426px;width:1px;height:27px;background:#e5e5e5"></div><div class="a" style="left:1299px;top:426px;width:1px;height:27px;background:#e5e5e5"></div><div class="t " style="left:962px;top:433.0px;font-size:12px;color:#4c607a;">修改日期</div><div class="t " style="left:1106px;top:433.0px;font-size:12px;color:#4c607a;">类型</div><div class="t " style="left:1226px;top:433.0px;font-size:12px;color:#4c607a;">大小</div><svg style="left:702px;top:462px" width="16" height="16" viewBox="0 0 16 16"><rect x="0" y="0" width="8" height="8" fill="#f05030"/><rect x="8" y="0" width="8" height="8" fill="#40b040"/><rect x="0" y="8" width="8" height="8" fill="#10a0f0"/><rect x="8" y="8" width="8" height="8" fill="#f0a010"/></svg><div class="t " style="left:722px;top:463.0px;font-size:12px;color:#1a1a1a;letter-spacing:.27px">W10DigitalActivation_x64.exe</div><div class="t " style="left:962px;top:463.0px;font-size:12px;color:#6d6d6d;letter-spacing:.5px">2023/12/2 20:35</div><div class="t " style="left:1106px;top:463.0px;font-size:12px;color:#6d6d6d;">应用程序</div><div class="t " style="left:992px;width:300px;text-align:right;top:463.0px;font-size:12px;color:#6d6d6d;">5,193 KB</div><div class="a" style="left:1305px;top:427px;width:1px;height:414px;background:#f0f0f0"></div><div class="t " style="left:1344.5px;width:200px;text-align:center;top:626.0px;font-size:12px;color:#555;letter-spacing:.3px">选择要预览的文件。</div><div class="a" style="left:683px;top:823px;width:621px;height:17px;background:#f0f0f0"></div><div class="a" style="left:701px;top:825px;width:580px;height:13px;background:#cdcdcd"></div><svg style="left:689px;top:827px" width="6" height="9" viewBox="0 0 6 9"><path d="M5 0.8l-3.7 3.7 3.7 3.7" fill="none" stroke="#555" stroke-width="1.5"/></svg><svg style="left:1293px;top:827px" width="6" height="9" viewBox="0 0 6 9"><path d="M1 0.8l3.7 3.7-3.7 3.7" fill="none" stroke="#555" stroke-width="1.5"/></svg><div class="t " style="left:463px;top:843.0px;font-size:12px;color:#222;letter-spacing:.4px">1 个项目</div><div class="a" style="left:1533px;top:840px;width:22px;height:23px;background:#c8e6f2;border:1px solid #1a9ad8"></div><svg style="left:1537px;top:845px" width="17" height="13" viewBox="0 0 17 13"><rect x="0" y="0" width="4.5" height="13" fill="#9a9aa2"/><rect x="1" y="1" width="2.5" height="3" fill="#fff"/><rect x="1" y="5" width="2.5" height="3" fill="#fff"/><rect x="1" y="9" width="2.5" height="3" fill="#fff"/><circle cx="2.25" cy="2.5" r=".6" fill="#555"/><circle cx="2.25" cy="6.5" r=".6" fill="#3a8ef0"/><circle cx="2.25" cy="10.5" r=".6" fill="#e02a1a"/><path d="M6 2.5h4M12 2.5h4M6 6.5h4M12 6.5h4M6 10.5h4M12 10.5h4" stroke="#6a6068" stroke-width="1.1"/></svg><svg style="left:1559px;top:845px" width="15" height="12" viewBox="0 0 15 12"><rect x="0.7" y="0.7" width="13.6" height="10.6" fill="#fff" stroke="#9a9aa4" stroke-width="1.4"/><rect x="2" y="2" width="11" height="8" fill="#8ac8f0"/><rect x="2" y="2" width="11" height="2" fill="#3a96f0"/><path d="M2 6l2-1 3 2v3H2z" fill="#3a8a3a"/><path d="M2 8h11v2H2z" fill="#2a6ab0"/><path d="M7 8l3-1 3 1v2H7z" fill="#b0b0b8"/></svg>
</body></html>
